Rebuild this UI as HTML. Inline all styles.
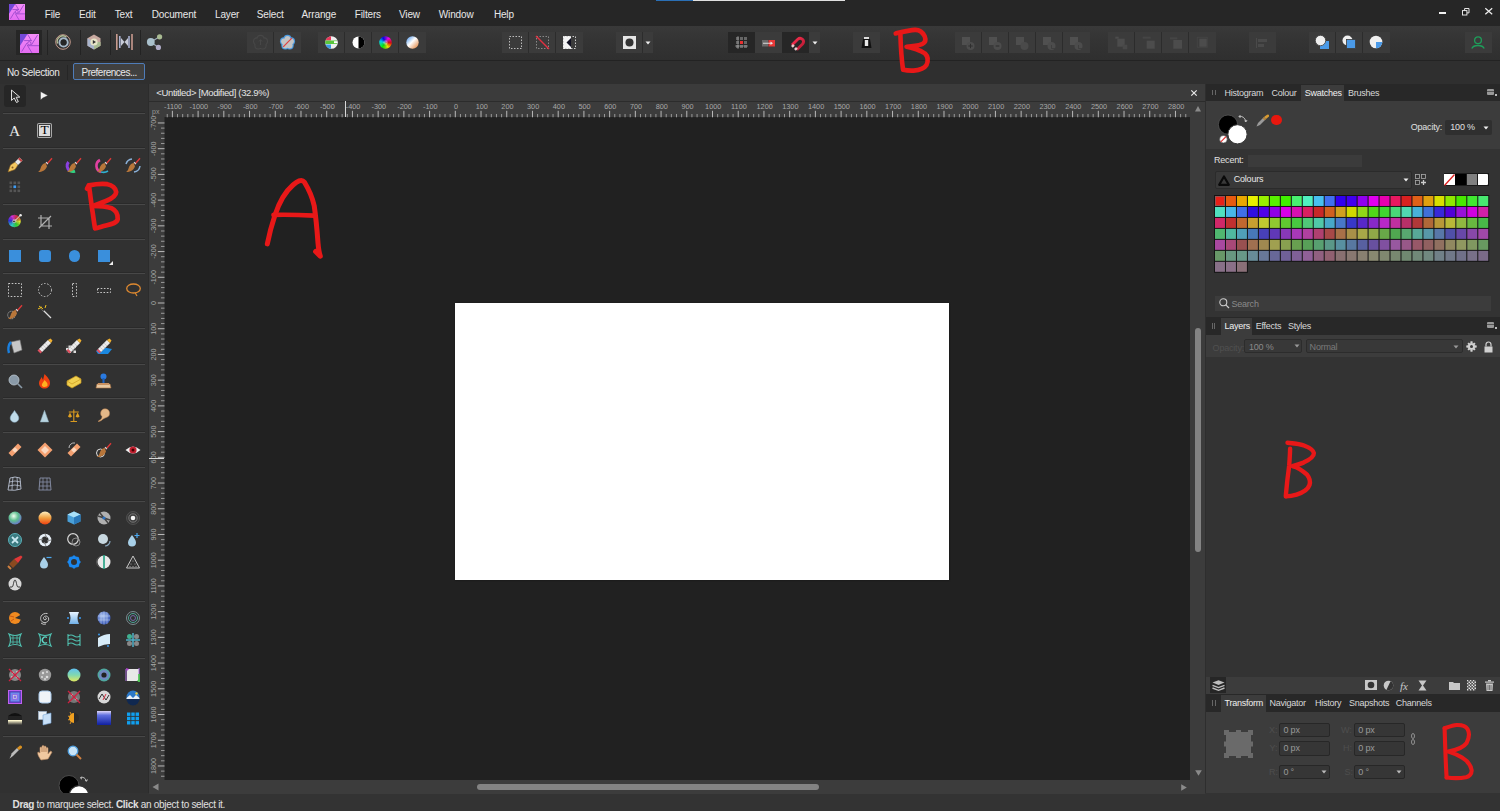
<!DOCTYPE html>
<html><head><meta charset="utf-8">
<style>
*{margin:0;padding:0;box-sizing:border-box}
html,body{width:1500px;height:811px;overflow:hidden;background:#2e2e2e;font-family:"Liberation Sans",sans-serif;color:#e6e6e6;font-size:10px}
.a{position:absolute}
.t{position:absolute;white-space:pre;line-height:10px;font-size:10px}
svg{position:absolute;overflow:visible}

</style></head><body>
<div class="a" style="left:0px;top:0px;width:1500px;height:26px;background:#262626;"></div>
<div class="a" style="left:0px;top:26px;width:1500px;height:34px;background:linear-gradient(#393939,#343434 40%,#2f2f2f);"></div>
<div class="a" style="left:0px;top:60px;width:1500px;height:1px;background:#232323;"></div>
<div class="a" style="left:0px;top:61px;width:1500px;height:23px;background:#2f2f2f;"></div>
<div class="a" style="left:0px;top:84px;width:148px;height:709px;background:#313131;"></div>
<div class="a" style="left:0px;top:793px;width:1500px;height:18px;background:#333333;"></div>
<div class="a" style="left:656px;top:0px;width:37px;height:1px;background:#2a6fb5;"></div>
<div class="a" style="left:693px;top:0px;width:152px;height:1px;background:#e0e0e0;"></div>
<svg style="left:9px;top:4px" width="16" height="16" viewBox="0 0 16 16"><defs><linearGradient id="lg0" x1="0" y1="0" x2="0" y2="1"><stop offset="0" stop-color="#f48ef8"/><stop offset="1" stop-color="#e46cf2"/></linearGradient></defs><g transform="scale(0.842)"><rect x="0" y="0" width="19" height="19" fill="url(#lg0)"/>
<path d="M0 0 H7.6 L0 11.7Z" fill="#7448d8"/>
<g stroke="#9a48cc" stroke-width="1" fill="none">
<path d="M4.1 6.6 H11.4 M7.6 0.3 L11.7 7.2 M17.6 1 L11.4 11 M8.3 11.7 H19 M7.2 11 L12 19 M1.7 17.6 L6.9 9"/><circle cx="9.3" cy="9.3" r="1.7"/></g></g></svg>
<div class="t" style="left:44.7px;top:9.73px;font-size:10px;line-height:10px;color:#e8e8e8;letter-spacing:-0.15px">File</div>
<div class="t" style="left:79px;top:9.73px;font-size:10px;line-height:10px;color:#e8e8e8;letter-spacing:-0.15px">Edit</div>
<div class="t" style="left:114.7px;top:9.73px;font-size:10px;line-height:10px;color:#e8e8e8;letter-spacing:-0.15px">Text</div>
<div class="t" style="left:151.8px;top:9.73px;font-size:10px;line-height:10px;color:#e8e8e8;letter-spacing:-0.15px">Document</div>
<div class="t" style="left:215px;top:9.73px;font-size:10px;line-height:10px;color:#e8e8e8;letter-spacing:-0.15px">Layer</div>
<div class="t" style="left:256.8px;top:9.73px;font-size:10px;line-height:10px;color:#e8e8e8;letter-spacing:-0.15px">Select</div>
<div class="t" style="left:301.6px;top:9.73px;font-size:10px;line-height:10px;color:#e8e8e8;letter-spacing:-0.15px">Arrange</div>
<div class="t" style="left:354.8px;top:9.73px;font-size:10px;line-height:10px;color:#e8e8e8;letter-spacing:-0.15px">Filters</div>
<div class="t" style="left:399px;top:9.73px;font-size:10px;line-height:10px;color:#e8e8e8;letter-spacing:-0.15px">View</div>
<div class="t" style="left:438.8px;top:9.73px;font-size:10px;line-height:10px;color:#e8e8e8;letter-spacing:-0.15px">Window</div>
<div class="t" style="left:493.9px;top:9.73px;font-size:10px;line-height:10px;color:#e8e8e8;letter-spacing:-0.15px">Help</div>
<div class="a" style="left:1439px;top:12.3px;width:7px;height:2.1px;background:#f0f0f0;"></div>
<svg style="left:1461.5px;top:8px" width="7.5" height="7.5" viewBox="0 0 7.5 7.5"><rect x="0.5" y="2.6" width="4.4" height="4.4" fill="#1a1a1a" stroke="#eee" stroke-width="0.95"/><path d="M2.6 2.6 V0.5 H7 V4.9 H4.9" fill="none" stroke="#eee" stroke-width="0.95"/></svg>
<svg style="left:1484.5px;top:8px" width="7.5" height="6.5" viewBox="0 0 7.5 6.5"><path d="M0.3 0.3 L7.2 6.2 M7.2 0.3 L0.3 6.2" stroke="#f0f0f0" stroke-width="1.2"/></svg>
<div class="a" style="left:16px;top:30px;width:26px;height:25px;background:#262626;"></div>
<svg style="left:19.5px;top:33.5px" width="19" height="19" viewBox="0 0 19 19"><defs><linearGradient id="lg1" x1="0" y1="0" x2="0" y2="1"><stop offset="0" stop-color="#f48ef8"/><stop offset="1" stop-color="#e46cf2"/></linearGradient></defs><rect x="0" y="0" width="19" height="19" fill="url(#lg1)"/>
<path d="M0 0 H7.6 L0 11.7Z" fill="#7448d8"/>
<g stroke="#9a48cc" stroke-width="0.9" fill="none">
<path d="M4.1 6.6 H11.4 M7.6 0.3 L11.7 7.2 M17.6 1 L11.4 11 M8.3 11.7 H19 M7.2 11 L12 19 M1.7 17.6 L6.9 9"/><circle cx="9.3" cy="9.3" r="1.7"/></g></svg>
<div class="a" style="left:46.5px;top:30px;width:1px;height:25px;background:#232323;"></div>
<div class="a" style="left:79.5px;top:30px;width:1px;height:25px;background:#232323;"></div>
<div class="a" style="left:109.5px;top:30px;width:1px;height:25px;background:#232323;"></div>
<div class="a" style="left:140px;top:30px;width:1px;height:25px;background:#232323;"></div>
<svg style="left:55px;top:34px" width="16" height="16" viewBox="0 0 16 16"><circle cx="8" cy="8" r="7.3" fill="none" stroke="#c49a8c" stroke-width="1"/><path d="M2.6 9.5 A5.6 5.6 0 0 1 11.5 3.3" fill="none" stroke="#b4c098" stroke-width="1.3"/><circle cx="8.6" cy="8.4" r="4.1" fill="none" stroke="#a6b8c8" stroke-width="2"/><circle cx="8.6" cy="8.4" r="2.9" fill="#262626"/></svg>
<svg style="left:86px;top:34px" width="16" height="16" viewBox="0 0 16 16"><path d="M8 0.5 L14.5 4.2 V11.8 L8 15.5 L1.5 11.8 V4.2 Z" fill="#c8a9a0"/><path d="M1.5 4.2 L8 8 V15.5 L1.5 11.8Z" fill="#a8b4cc"/><path d="M14.5 8 V11.8 L8 15.5 V8Z" fill="#a7bb92"/><circle cx="8" cy="8" r="3.6" fill="#e8e6c8"/><path d="M6.8 6 L10 8 L6.8 10Z" fill="#333"/></svg>
<svg style="left:116px;top:34px" width="17" height="16" viewBox="0 0 17 16"><rect x="0" y="0" width="1.6" height="16" fill="#c79a8e"/><rect x="15.2" y="0" width="1.6" height="16" fill="#c79a8e"/><rect x="3" y="2" width="1.6" height="12" fill="#a8b0d0"/><rect x="12.2" y="2" width="1.6" height="12" fill="#a8b0d0"/><path d="M5 4 L8.5 8 L12 4 V12 L8.5 8 L5 12Z" fill="#c8ccd8"/></svg>
<svg style="left:146px;top:34px" width="16" height="16" viewBox="0 0 16 16"><path d="M4.8 8 L13.6 2.8 M4.8 8 L12.4 13.4" stroke="#9aa8b8" stroke-width="1.2"/><circle cx="4.8" cy="8" r="3.9" fill="#a9c0cc"/><circle cx="13.6" cy="2.8" r="2.6" fill="#a9bb92"/><circle cx="12.4" cy="13.4" r="2.6" fill="#b0acc8"/></svg>
<div class="a" style="left:247px;top:32px;width:26px;height:21px;background:#3b3b3b;"></div>
<div class="a" style="left:273px;top:32px;width:1px;height:21px;background:#2c2c2c;"></div>
<div class="a" style="left:274px;top:32px;width:27px;height:21px;background:#3b3b3b;"></div>
<svg style="left:252.5px;top:35px" width="15" height="15" viewBox="0 0 15 15"><circle cx="7.5" cy="7.5" r="4.70" fill="#474747"/><circle cx="7.50" cy="3.80" r="4.00" fill="#474747"/><circle cx="11.02" cy="6.36" r="4.00" fill="#474747"/><circle cx="9.67" cy="10.49" r="4.00" fill="#474747"/><circle cx="5.33" cy="10.49" r="4.00" fill="#474747"/><circle cx="3.98" cy="6.36" r="4.00" fill="#474747"/><circle cx="7.5" cy="7.5" r="3.60" fill="#3b3b3b"/><circle cx="7.50" cy="3.80" r="2.90" fill="#3b3b3b"/><circle cx="11.02" cy="6.36" r="2.90" fill="#3b3b3b"/><circle cx="9.67" cy="10.49" r="2.90" fill="#3b3b3b"/><circle cx="5.33" cy="10.49" r="2.90" fill="#3b3b3b"/><circle cx="3.98" cy="6.36" r="2.90" fill="#3b3b3b"/><path d="M7.5 4.8 V10 M5.6 6.6 L7.5 4.8 L9.4 6.6" stroke="#474747" stroke-width="1" fill="none"/></svg>
<svg style="left:279.5px;top:35px" width="15" height="15" viewBox="0 0 15 15"><circle cx="7.5" cy="7.5" r="4.70" fill="#4a9ae0"/><circle cx="7.50" cy="3.80" r="4.00" fill="#4a9ae0"/><circle cx="11.02" cy="6.36" r="4.00" fill="#4a9ae0"/><circle cx="9.67" cy="10.49" r="4.00" fill="#4a9ae0"/><circle cx="5.33" cy="10.49" r="4.00" fill="#4a9ae0"/><circle cx="3.98" cy="6.36" r="4.00" fill="#4a9ae0"/><circle cx="7.5" cy="7.5" r="3.60" fill="#c4c4c4"/><circle cx="7.50" cy="3.80" r="2.90" fill="#c4c4c4"/><circle cx="11.02" cy="6.36" r="2.90" fill="#c4c4c4"/><circle cx="9.67" cy="10.49" r="2.90" fill="#c4c4c4"/><circle cx="5.33" cy="10.49" r="2.90" fill="#c4c4c4"/><circle cx="3.98" cy="6.36" r="2.90" fill="#c4c4c4"/><path d="M3.2 11.8 L11.8 3.2" stroke="#e04040" stroke-width="1.2"/></svg>
<div class="a" style="left:318px;top:32px;width:26px;height:21px;background:#3b3b3b;"></div>
<div class="a" style="left:344px;top:32px;width:1px;height:21px;background:#2c2c2c;"></div>
<div class="a" style="left:345px;top:32px;width:26px;height:21px;background:#3b3b3b;"></div>
<div class="a" style="left:371px;top:32px;width:1px;height:21px;background:#2c2c2c;"></div>
<div class="a" style="left:372px;top:32px;width:26px;height:21px;background:#3b3b3b;"></div>
<div class="a" style="left:398px;top:32px;width:1px;height:21px;background:#2c2c2c;"></div>
<div class="a" style="left:399px;top:32px;width:27px;height:21px;background:#3b3b3b;"></div>
<svg style="left:325px;top:36px" width="13" height="13" viewBox="0 0 13 13"><clipPath id="c3a"><circle cx="6.5" cy="6.5" r="6.3"/></clipPath><g clip-path="url(#c3a)"><rect x="0" y="0" width="13" height="13" fill="#eee"/><rect x="0" y="0" width="6" height="4.5" fill="#e8385a"/><rect x="0" y="4.5" width="12" height="3.5" fill="#59c63a"/><rect x="0" y="8.5" width="6" height="5" fill="#3a9ae0"/><rect x="9" y="5.2" width="3.5" height="2" fill="#fff"/></g></svg>
<svg style="left:352px;top:36px" width="13" height="13" viewBox="0 0 13 13"><circle cx="6.5" cy="6.5" r="6" fill="#fff"/><path d="M6.5 0.5 A6 6 0 0 1 6.5 12.5Z" fill="#000"/></svg>
<svg style="left:379px;top:36px" width="13" height="13" viewBox="0 0 13 13"><path d="M6.5 6.5 L12.70 6.50 A6.2 6.2 0 0 1 12.59 7.66Z" fill="#ff0000"/><path d="M6.5 6.5 L12.61 7.58 A6.2 6.2 0 0 1 12.30 8.70Z" fill="#ff2a00"/><path d="M6.5 6.5 L12.33 8.62 A6.2 6.2 0 0 1 11.83 9.67Z" fill="#ff5500"/><path d="M6.5 6.5 L11.87 9.60 A6.2 6.2 0 0 1 11.19 10.55Z" fill="#ff7f00"/><path d="M6.5 6.5 L11.25 10.49 A6.2 6.2 0 0 1 10.42 11.30Z" fill="#ffaa00"/><path d="M6.5 6.5 L10.49 11.25 A6.2 6.2 0 0 1 9.52 11.91Z" fill="#ffd400"/><path d="M6.5 6.5 L9.60 11.87 A6.2 6.2 0 0 1 8.54 12.36Z" fill="#feff00"/><path d="M6.5 6.5 L8.62 12.33 A6.2 6.2 0 0 1 7.49 12.62Z" fill="#d4ff00"/><path d="M6.5 6.5 L7.58 12.61 A6.2 6.2 0 0 1 6.41 12.70Z" fill="#a9ff00"/><path d="M6.5 6.5 L6.50 12.70 A6.2 6.2 0 0 1 5.34 12.59Z" fill="#7fff00"/><path d="M6.5 6.5 L5.42 12.61 A6.2 6.2 0 0 1 4.30 12.30Z" fill="#54ff00"/><path d="M6.5 6.5 L4.38 12.33 A6.2 6.2 0 0 1 3.33 11.83Z" fill="#2aff00"/><path d="M6.5 6.5 L3.40 11.87 A6.2 6.2 0 0 1 2.45 11.19Z" fill="#00ff00"/><path d="M6.5 6.5 L2.51 11.25 A6.2 6.2 0 0 1 1.70 10.42Z" fill="#00ff2a"/><path d="M6.5 6.5 L1.75 10.49 A6.2 6.2 0 0 1 1.09 9.52Z" fill="#00ff55"/><path d="M6.5 6.5 L1.13 9.60 A6.2 6.2 0 0 1 0.64 8.54Z" fill="#00ff7f"/><path d="M6.5 6.5 L0.67 8.62 A6.2 6.2 0 0 1 0.38 7.49Z" fill="#00ffaa"/><path d="M6.5 6.5 L0.39 7.58 A6.2 6.2 0 0 1 0.30 6.41Z" fill="#00ffd4"/><path d="M6.5 6.5 L0.30 6.50 A6.2 6.2 0 0 1 0.41 5.34Z" fill="#00feff"/><path d="M6.5 6.5 L0.39 5.42 A6.2 6.2 0 0 1 0.70 4.30Z" fill="#00d4ff"/><path d="M6.5 6.5 L0.67 4.38 A6.2 6.2 0 0 1 1.17 3.33Z" fill="#00a9ff"/><path d="M6.5 6.5 L1.13 3.40 A6.2 6.2 0 0 1 1.81 2.45Z" fill="#007fff"/><path d="M6.5 6.5 L1.75 2.51 A6.2 6.2 0 0 1 2.58 1.70Z" fill="#0054ff"/><path d="M6.5 6.5 L2.51 1.75 A6.2 6.2 0 0 1 3.48 1.09Z" fill="#002aff"/><path d="M6.5 6.5 L3.40 1.13 A6.2 6.2 0 0 1 4.46 0.64Z" fill="#0000ff"/><path d="M6.5 6.5 L4.38 0.67 A6.2 6.2 0 0 1 5.51 0.38Z" fill="#2a00ff"/><path d="M6.5 6.5 L5.42 0.39 A6.2 6.2 0 0 1 6.59 0.30Z" fill="#5500ff"/><path d="M6.5 6.5 L6.50 0.30 A6.2 6.2 0 0 1 7.66 0.41Z" fill="#7f00ff"/><path d="M6.5 6.5 L7.58 0.39 A6.2 6.2 0 0 1 8.70 0.70Z" fill="#aa00ff"/><path d="M6.5 6.5 L8.62 0.67 A6.2 6.2 0 0 1 9.67 1.17Z" fill="#d400ff"/><path d="M6.5 6.5 L9.60 1.13 A6.2 6.2 0 0 1 10.55 1.81Z" fill="#ff00fe"/><path d="M6.5 6.5 L10.49 1.75 A6.2 6.2 0 0 1 11.30 2.58Z" fill="#ff00d4"/><path d="M6.5 6.5 L11.25 2.51 A6.2 6.2 0 0 1 11.91 3.48Z" fill="#ff00a9"/><path d="M6.5 6.5 L11.87 3.40 A6.2 6.2 0 0 1 12.36 4.46Z" fill="#ff007f"/><path d="M6.5 6.5 L12.33 4.38 A6.2 6.2 0 0 1 12.62 5.51Z" fill="#ff0054"/><path d="M6.5 6.5 L12.61 5.42 A6.2 6.2 0 0 1 12.70 6.59Z" fill="#ff002a"/><circle cx="6.5" cy="6.5" r="2.2" fill="#fff" opacity="0.35"/></svg>
<svg style="left:406px;top:36px" width="13" height="13" viewBox="0 0 13 13"><defs><linearGradient id="gg" x1="0" y1="0" x2="1" y2="1"><stop offset="0" stop-color="#3a8ae8"/><stop offset="0.45" stop-color="#fff"/><stop offset="1" stop-color="#e0782a"/></linearGradient></defs><circle cx="6.5" cy="6.5" r="6.2" fill="url(#gg)"/></svg>
<div class="a" style="left:502px;top:32px;width:26px;height:21px;background:#3b3b3b;"></div>
<div class="a" style="left:528px;top:32px;width:1px;height:21px;background:#2c2c2c;"></div>
<div class="a" style="left:529px;top:32px;width:26px;height:21px;background:#3b3b3b;"></div>
<div class="a" style="left:555px;top:32px;width:1px;height:21px;background:#2c2c2c;"></div>
<div class="a" style="left:556px;top:32px;width:27px;height:21px;background:#3b3b3b;"></div>
<svg style="left:509px;top:36px" width="13" height="13" viewBox="0 0 13 13"><rect x="0.5" y="0.5" width="12" height="12" fill="none" stroke="#bbb" stroke-width="1" stroke-dasharray="1.5 1.5"/></svg>
<svg style="left:536px;top:36px" width="13" height="13" viewBox="0 0 13 13"><rect x="0.5" y="0.5" width="12" height="12" fill="none" stroke="#888" stroke-width="1" stroke-dasharray="1.5 1.5"/><path d="M0 0 L13 13" stroke="#e03040" stroke-width="1.4"/></svg>
<svg style="left:563px;top:36px" width="13" height="13" viewBox="0 0 13 13"><rect x="0" y="0" width="8" height="13" fill="#f4f4f4"/><path d="M8 2 L3.5 6.5 L8 11Z" fill="#112"/><rect x="0.5" y="0.5" width="12" height="12" fill="none" stroke="#ccc" stroke-width="1" stroke-dasharray="1.5 1.5"/></svg>
<div class="a" style="left:616px;top:32px;width:26px;height:21px;background:#3b3b3b;"></div>
<div class="a" style="left:642px;top:32px;width:1px;height:21px;background:#2c2c2c;"></div>
<div class="a" style="left:643px;top:32px;width:10px;height:21px;background:#3b3b3b;"></div>
<svg style="left:623px;top:36px" width="13" height="13" viewBox="0 0 13 13"><rect x="0" y="0" width="13" height="13" fill="#e6e6e6"/><circle cx="6.5" cy="6.5" r="4" fill="#333"/></svg>
<svg style="left:645px;top:41px" width="6" height="4" viewBox="0 0 6 4"><path d="M0.5 0.5 H5.5 L3 3.5Z" fill="#eee"/></svg>
<div class="a" style="left:728px;top:32px;width:27px;height:21px;background:#262626;"></div>
<div class="a" style="left:755px;top:32px;width:27px;height:21px;background:#3b3b3b;"></div>
<div class="a" style="left:782px;top:32px;width:27px;height:21px;background:#262626;"></div>
<div class="a" style="left:809px;top:32px;width:11px;height:21px;background:#3b3b3b;"></div>
<svg style="left:735px;top:36px" width="13" height="13" viewBox="0 0 13 13"><g fill="#666"><rect x="1" y="1" width="3" height="3"/><rect x="5" y="1" width="3" height="3"/><rect x="9" y="1" width="3" height="3"/><rect x="1" y="5" width="3" height="3"/><rect x="9" y="5" width="3" height="3"/><rect x="1" y="9" width="3" height="3"/><rect x="5" y="9" width="3" height="3"/><rect x="9" y="9" width="3" height="3"/></g><rect x="5" y="5" width="3" height="3" fill="#e83030"/><path d="M3 0 V13 M0 10 H13" stroke="#aaa" stroke-width="0.6"/></svg>
<svg style="left:762px;top:40px" width="13" height="6.5" viewBox="0 0 13 6.5"><rect x="0" y="0" width="6" height="6.5" fill="#6a6a6a"/><rect x="6.5" y="0" width="6.5" height="6.5" fill="#e83838"/><path d="M1 3.25 H10" stroke="#e8e8e8" stroke-width="0.9"/><path d="M8.5 1.6 L11 3.25 L8.5 4.9Z" fill="#e8e8e8"/></svg>
<svg style="left:788.5px;top:34.2px" width="16" height="15" viewBox="0 0 16 15"><defs><linearGradient id="mg" x1="0" y1="0" x2="1" y2="1"><stop offset="0" stop-color="#ff3050"/><stop offset="1" stop-color="#b01830"/></linearGradient></defs><path d="M3 11 L8.8 5.2 A3.4 3.4 0 0 1 13.6 10 L7.8 15.8" fill="none" stroke="url(#mg)" stroke-width="2.8"/><path d="M3 11 L4.8 12.8 M7.8 15.8 L6 14" stroke="#e8c8c8" stroke-width="2.8"/></svg>
<svg style="left:812px;top:41px" width="6" height="4" viewBox="0 0 6 4"><path d="M0.5 0.5 H5.5 L3 3.5Z" fill="#eee"/></svg>
<div class="a" style="left:853px;top:32px;width:27px;height:21px;background:#3b3b3b;"></div>
<svg style="left:861px;top:36px" width="11" height="13" viewBox="0 0 11 13"><path d="M2 3 H9 L10.5 12 H0.5Z" fill="#111"/><rect x="3" y="1" width="5" height="2" fill="#ddd"/><rect x="3.8" y="4" width="3.4" height="6" fill="#e8e8e8"/></svg>
<div class="a" style="left:955px;top:32px;width:26px;height:21px;background:#3b3b3b;"></div>
<div class="a" style="left:981px;top:32px;width:1px;height:21px;background:#2c2c2c;"></div>
<div class="a" style="left:982px;top:32px;width:26px;height:21px;background:#3b3b3b;"></div>
<div class="a" style="left:1008px;top:32px;width:1px;height:21px;background:#2c2c2c;"></div>
<div class="a" style="left:1009px;top:32px;width:26px;height:21px;background:#3b3b3b;"></div>
<div class="a" style="left:1035px;top:32px;width:1px;height:21px;background:#2c2c2c;"></div>
<div class="a" style="left:1036px;top:32px;width:26px;height:21px;background:#3b3b3b;"></div>
<div class="a" style="left:1062px;top:32px;width:1px;height:21px;background:#2c2c2c;"></div>
<div class="a" style="left:1063px;top:32px;width:27px;height:21px;background:#3b3b3b;"></div>
<svg style="left:962px;top:37px" width="16" height="16" viewBox="0 0 16 16"><rect x="0" y="0" width="8" height="8" fill="#505050"/><circle cx="8.5" cy="9" r="4" fill="#4c4c4c"/><path d="M8.5 6.8 V11.2 M6.3 9 H10.7" stroke="#2e2e2e" stroke-width="1"/></svg>
<svg style="left:989px;top:37px" width="16" height="16" viewBox="0 0 16 16"><rect x="0" y="0" width="8" height="8" fill="#505050"/><circle cx="8.5" cy="9" r="4" fill="#4c4c4c"/><path d="M6.7 9 H10.3" stroke="#2e2e2e" stroke-width="1.1"/></svg>
<svg style="left:1016px;top:37px" width="16" height="16" viewBox="0 0 16 16"><rect x="0" y="0" width="8" height="8" fill="#4e4e4e"/><circle cx="8.5" cy="9" r="4" fill="#4a4a4a"/></svg>
<svg style="left:1043px;top:37px" width="16" height="16" viewBox="0 0 16 16"><rect x="0" y="0" width="8" height="8" fill="#505050"/><circle cx="8.5" cy="9" r="4" fill="#4c4c4c"/><path d="M8.5 8 V11.5 H12" fill="none" stroke="#3b3b3b" stroke-width="0.8"/></svg>
<svg style="left:1070px;top:37px" width="16" height="16" viewBox="0 0 16 16"><rect x="0" y="0" width="8" height="8" fill="#505050"/><circle cx="8.5" cy="9" r="4" fill="#4c4c4c"/><path d="M8.5 8 V11.5 H12" fill="none" stroke="#3b3b3b" stroke-width="0.8"/></svg>
<div class="a" style="left:1108px;top:32px;width:26px;height:21px;background:#3b3b3b;"></div>
<div class="a" style="left:1134px;top:32px;width:1px;height:21px;background:#2c2c2c;"></div>
<div class="a" style="left:1135px;top:32px;width:26px;height:21px;background:#3b3b3b;"></div>
<div class="a" style="left:1161px;top:32px;width:1px;height:21px;background:#2c2c2c;"></div>
<div class="a" style="left:1162px;top:32px;width:26px;height:21px;background:#3b3b3b;"></div>
<div class="a" style="left:1188px;top:32px;width:1px;height:21px;background:#2c2c2c;"></div>
<div class="a" style="left:1189px;top:32px;width:27px;height:21px;background:#3b3b3b;"></div>
<svg style="left:1108px;top:26px" width="108" height="34" viewBox="0 0 108 34"><g fill="#4c4c4c"><rect x="7.3" y="10.7" width="3.4" height="2"/><rect x="9.3" y="12.7" width="7.4" height="8"/><rect x="14.7" y="18.7" width="4.6" height="4.6" fill="#484848"/><rect x="34.7" y="10.7" width="8" height="2" fill="#454545"/><rect x="38.7" y="14.7" width="8" height="8"/><rect x="62" y="11.3" width="7.3" height="2" fill="#454545"/><rect x="65.3" y="14" width="8.7" height="8.7"/><rect x="89.3" y="11.3" width="10" height="10" fill="none" stroke="#454545" stroke-width="0.8"/><rect x="91.3" y="12.7" width="7.4" height="8"/></g></svg>
<div class="a" style="left:1249px;top:32px;width:27px;height:21px;background:#3b3b3b;"></div>
<svg style="left:1256px;top:38px" width="12" height="10" viewBox="0 0 12 10"><rect x="0" y="0" width="1" height="10" fill="#4a4a4a"/><rect x="2" y="1" width="9" height="3" fill="#4a4a4a"/><rect x="2" y="6" width="6" height="3" fill="#4a4a4a"/></svg>
<div class="a" style="left:1309px;top:32px;width:26px;height:21px;background:#3b3b3b;"></div>
<div class="a" style="left:1335px;top:32px;width:1px;height:21px;background:#2c2c2c;"></div>
<div class="a" style="left:1336px;top:32px;width:26px;height:21px;background:#3b3b3b;"></div>
<div class="a" style="left:1362px;top:32px;width:1px;height:21px;background:#2c2c2c;"></div>
<div class="a" style="left:1363px;top:32px;width:27px;height:21px;background:#3b3b3b;"></div>
<svg style="left:1315px;top:35px" width="15" height="15" viewBox="0 0 15 15"><rect x="5" y="6" width="9" height="8" fill="#4a9ae8"/><circle cx="5.5" cy="5.5" r="5.2" fill="#efefef" stroke="#3b3b3b" stroke-width="0.8"/></svg>
<svg style="left:1342px;top:35px" width="15" height="15" viewBox="0 0 15 15"><circle cx="5.5" cy="5.5" r="5" fill="#efefef"/><rect x="4.5" y="4.5" width="9" height="9" fill="#4a9ae8" stroke="#3b3b3b" stroke-width="0.8"/></svg>
<svg style="left:1369px;top:35px" width="15" height="15" viewBox="0 0 15 15"><circle cx="7" cy="7" r="6.3" fill="#efefef"/><path d="M7 7 H13.3 A6.3 6.3 0 0 1 7 13.3Z" fill="#4a9ae8"/></svg>
<div class="a" style="left:1465px;top:32px;width:27px;height:21px;background:#3b3b3b;"></div>
<svg style="left:1471px;top:36px" width="14" height="13" viewBox="0 0 14 13"><circle cx="7" cy="4.2" r="3.4" fill="none" stroke="#1e9e5a" stroke-width="1.3"/><path d="M0.8 12.5 C2.5 8.5 11.5 8.5 13.2 12.5" fill="none" stroke="#1e9e5a" stroke-width="1.3"/></svg>
<div class="t" style="left:7px;top:67.53px;font-size:10px;line-height:10px;color:#e8e8e8;letter-spacing:-0.35px">No Selection</div>
<div class="a" style="left:67px;top:65px;width:1px;height:15px;background:#262626;"></div>
<div class="a" style="left:72.5px;top:63.3px;width:72.5px;height:16.4px;background:#404040;border:1px solid #4f7cb8;border-radius:2px"></div>
<div class="t" style="left:81.5px;top:67.53px;font-size:10px;line-height:10px;color:#e8e8e8;letter-spacing:-0.5px">Preferences...</div>
<div class="a" style="left:149px;top:84px;width:1056px;height:17px;background:#3b3b3b;"></div>
<div class="t" style="left:156.3px;top:88.46px;font-size:9.5px;line-height:9.5px;color:#e4e4e4;letter-spacing:-0.35px">&lt;Untitled&gt; [Modified] (32.9%)</div>
<svg style="left:1191.3px;top:89.5px" width="6" height="6" viewBox="0 0 6 6"><path d="M0.3 0.3 L5.7 5.7 M5.7 0.3 L0.3 5.7" stroke="#e8e8e8" stroke-width="1.2"/></svg>
<div class="a" style="left:1205px;top:84px;width:1.5px;height:709px;background:#2e2e2e;"></div>
<div class="a" style="left:149px;top:101px;width:1056px;height:16px;background:#3c3c3c;"></div>
<div class="a" style="left:149px;top:101px;width:1056px;height:1px;background:#2c2c2c;"></div>
<div class="a" style="left:149px;top:117px;width:15px;height:663px;background:#3c3c3c;"></div>
<div class="a" style="left:164.5px;top:117.3px;width:1026px;height:662.5px;background:#212121;"></div>
<div class="a" style="left:1190px;top:117px;width:15px;height:663px;background:#3c3c3c;"></div>
<div class="a" style="left:149px;top:780px;width:1056px;height:13.8px;background:#3c3c3c;"></div>
<div class="a" style="left:455.3px;top:302.6px;width:493.5px;height:277.5px;background:#ffffff;box-shadow:0 0 1.5px 0.5px #151515"></div>
<svg style="left:0;top:0" width="1500" height="811"><rect x="166.74" y="114" width="1" height="3.3" fill="#9a9a9a"/><rect x="171.88" y="110.8" width="1" height="6.5" fill="#b8b8b8"/><text x="173.08" y="109.3" font-size="7.3" fill="#a8a8a8" text-anchor="middle" font-family="Liberation Sans">-1100</text><rect x="177.02" y="114" width="1" height="3.3" fill="#9a9a9a"/><rect x="182.17" y="114" width="1" height="3.3" fill="#9a9a9a"/><rect x="187.31" y="114" width="1" height="3.3" fill="#9a9a9a"/><rect x="192.46" y="114" width="1" height="3.3" fill="#9a9a9a"/><rect x="197.60" y="110.8" width="1" height="6.5" fill="#b8b8b8"/><text x="198.80" y="109.3" font-size="7.3" fill="#a8a8a8" text-anchor="middle" font-family="Liberation Sans">-1000</text><rect x="202.74" y="114" width="1" height="3.3" fill="#9a9a9a"/><rect x="207.89" y="114" width="1" height="3.3" fill="#9a9a9a"/><rect x="213.03" y="114" width="1" height="3.3" fill="#9a9a9a"/><rect x="218.18" y="114" width="1" height="3.3" fill="#9a9a9a"/><rect x="223.32" y="110.8" width="1" height="6.5" fill="#b8b8b8"/><text x="224.52" y="109.3" font-size="7.3" fill="#a8a8a8" text-anchor="middle" font-family="Liberation Sans">-900</text><rect x="228.46" y="114" width="1" height="3.3" fill="#9a9a9a"/><rect x="233.61" y="114" width="1" height="3.3" fill="#9a9a9a"/><rect x="238.75" y="114" width="1" height="3.3" fill="#9a9a9a"/><rect x="243.90" y="114" width="1" height="3.3" fill="#9a9a9a"/><rect x="249.04" y="110.8" width="1" height="6.5" fill="#b8b8b8"/><text x="250.24" y="109.3" font-size="7.3" fill="#a8a8a8" text-anchor="middle" font-family="Liberation Sans">-800</text><rect x="254.18" y="114" width="1" height="3.3" fill="#9a9a9a"/><rect x="259.33" y="114" width="1" height="3.3" fill="#9a9a9a"/><rect x="264.47" y="114" width="1" height="3.3" fill="#9a9a9a"/><rect x="269.62" y="114" width="1" height="3.3" fill="#9a9a9a"/><rect x="274.76" y="110.8" width="1" height="6.5" fill="#b8b8b8"/><text x="275.96" y="109.3" font-size="7.3" fill="#a8a8a8" text-anchor="middle" font-family="Liberation Sans">-700</text><rect x="279.90" y="114" width="1" height="3.3" fill="#9a9a9a"/><rect x="285.05" y="114" width="1" height="3.3" fill="#9a9a9a"/><rect x="290.19" y="114" width="1" height="3.3" fill="#9a9a9a"/><rect x="295.34" y="114" width="1" height="3.3" fill="#9a9a9a"/><rect x="300.48" y="110.8" width="1" height="6.5" fill="#b8b8b8"/><text x="301.68" y="109.3" font-size="7.3" fill="#a8a8a8" text-anchor="middle" font-family="Liberation Sans">-600</text><rect x="305.62" y="114" width="1" height="3.3" fill="#9a9a9a"/><rect x="310.77" y="114" width="1" height="3.3" fill="#9a9a9a"/><rect x="315.91" y="114" width="1" height="3.3" fill="#9a9a9a"/><rect x="321.06" y="114" width="1" height="3.3" fill="#9a9a9a"/><rect x="326.20" y="110.8" width="1" height="6.5" fill="#b8b8b8"/><text x="327.40" y="109.3" font-size="7.3" fill="#a8a8a8" text-anchor="middle" font-family="Liberation Sans">-500</text><rect x="331.34" y="114" width="1" height="3.3" fill="#9a9a9a"/><rect x="336.49" y="114" width="1" height="3.3" fill="#9a9a9a"/><rect x="341.63" y="114" width="1" height="3.3" fill="#9a9a9a"/><rect x="346.78" y="114" width="1" height="3.3" fill="#9a9a9a"/><rect x="351.92" y="110.8" width="1" height="6.5" fill="#b8b8b8"/><text x="353.12" y="109.3" font-size="7.3" fill="#a8a8a8" text-anchor="middle" font-family="Liberation Sans">-400</text><rect x="357.06" y="114" width="1" height="3.3" fill="#9a9a9a"/><rect x="362.21" y="114" width="1" height="3.3" fill="#9a9a9a"/><rect x="367.35" y="114" width="1" height="3.3" fill="#9a9a9a"/><rect x="372.50" y="114" width="1" height="3.3" fill="#9a9a9a"/><rect x="377.64" y="110.8" width="1" height="6.5" fill="#b8b8b8"/><text x="378.84" y="109.3" font-size="7.3" fill="#a8a8a8" text-anchor="middle" font-family="Liberation Sans">-300</text><rect x="382.78" y="114" width="1" height="3.3" fill="#9a9a9a"/><rect x="387.93" y="114" width="1" height="3.3" fill="#9a9a9a"/><rect x="393.07" y="114" width="1" height="3.3" fill="#9a9a9a"/><rect x="398.22" y="114" width="1" height="3.3" fill="#9a9a9a"/><rect x="403.36" y="110.8" width="1" height="6.5" fill="#b8b8b8"/><text x="404.56" y="109.3" font-size="7.3" fill="#a8a8a8" text-anchor="middle" font-family="Liberation Sans">-200</text><rect x="408.50" y="114" width="1" height="3.3" fill="#9a9a9a"/><rect x="413.65" y="114" width="1" height="3.3" fill="#9a9a9a"/><rect x="418.79" y="114" width="1" height="3.3" fill="#9a9a9a"/><rect x="423.94" y="114" width="1" height="3.3" fill="#9a9a9a"/><rect x="429.08" y="110.8" width="1" height="6.5" fill="#b8b8b8"/><text x="430.28" y="109.3" font-size="7.3" fill="#a8a8a8" text-anchor="middle" font-family="Liberation Sans">-100</text><rect x="434.22" y="114" width="1" height="3.3" fill="#9a9a9a"/><rect x="439.37" y="114" width="1" height="3.3" fill="#9a9a9a"/><rect x="444.51" y="114" width="1" height="3.3" fill="#9a9a9a"/><rect x="449.66" y="114" width="1" height="3.3" fill="#9a9a9a"/><rect x="454.80" y="110.8" width="1" height="6.5" fill="#b8b8b8"/><text x="456.00" y="109.3" font-size="7.3" fill="#a8a8a8" text-anchor="middle" font-family="Liberation Sans">0</text><rect x="459.94" y="114" width="1" height="3.3" fill="#9a9a9a"/><rect x="465.09" y="114" width="1" height="3.3" fill="#9a9a9a"/><rect x="470.23" y="114" width="1" height="3.3" fill="#9a9a9a"/><rect x="475.38" y="114" width="1" height="3.3" fill="#9a9a9a"/><rect x="480.52" y="110.8" width="1" height="6.5" fill="#b8b8b8"/><text x="481.72" y="109.3" font-size="7.3" fill="#a8a8a8" text-anchor="middle" font-family="Liberation Sans">100</text><rect x="485.66" y="114" width="1" height="3.3" fill="#9a9a9a"/><rect x="490.81" y="114" width="1" height="3.3" fill="#9a9a9a"/><rect x="495.95" y="114" width="1" height="3.3" fill="#9a9a9a"/><rect x="501.10" y="114" width="1" height="3.3" fill="#9a9a9a"/><rect x="506.24" y="110.8" width="1" height="6.5" fill="#b8b8b8"/><text x="507.44" y="109.3" font-size="7.3" fill="#a8a8a8" text-anchor="middle" font-family="Liberation Sans">200</text><rect x="511.38" y="114" width="1" height="3.3" fill="#9a9a9a"/><rect x="516.53" y="114" width="1" height="3.3" fill="#9a9a9a"/><rect x="521.67" y="114" width="1" height="3.3" fill="#9a9a9a"/><rect x="526.82" y="114" width="1" height="3.3" fill="#9a9a9a"/><rect x="531.96" y="110.8" width="1" height="6.5" fill="#b8b8b8"/><text x="533.16" y="109.3" font-size="7.3" fill="#a8a8a8" text-anchor="middle" font-family="Liberation Sans">300</text><rect x="537.10" y="114" width="1" height="3.3" fill="#9a9a9a"/><rect x="542.25" y="114" width="1" height="3.3" fill="#9a9a9a"/><rect x="547.39" y="114" width="1" height="3.3" fill="#9a9a9a"/><rect x="552.54" y="114" width="1" height="3.3" fill="#9a9a9a"/><rect x="557.68" y="110.8" width="1" height="6.5" fill="#b8b8b8"/><text x="558.88" y="109.3" font-size="7.3" fill="#a8a8a8" text-anchor="middle" font-family="Liberation Sans">400</text><rect x="562.82" y="114" width="1" height="3.3" fill="#9a9a9a"/><rect x="567.97" y="114" width="1" height="3.3" fill="#9a9a9a"/><rect x="573.11" y="114" width="1" height="3.3" fill="#9a9a9a"/><rect x="578.26" y="114" width="1" height="3.3" fill="#9a9a9a"/><rect x="583.40" y="110.8" width="1" height="6.5" fill="#b8b8b8"/><text x="584.60" y="109.3" font-size="7.3" fill="#a8a8a8" text-anchor="middle" font-family="Liberation Sans">500</text><rect x="588.54" y="114" width="1" height="3.3" fill="#9a9a9a"/><rect x="593.69" y="114" width="1" height="3.3" fill="#9a9a9a"/><rect x="598.83" y="114" width="1" height="3.3" fill="#9a9a9a"/><rect x="603.98" y="114" width="1" height="3.3" fill="#9a9a9a"/><rect x="609.12" y="110.8" width="1" height="6.5" fill="#b8b8b8"/><text x="610.32" y="109.3" font-size="7.3" fill="#a8a8a8" text-anchor="middle" font-family="Liberation Sans">600</text><rect x="614.26" y="114" width="1" height="3.3" fill="#9a9a9a"/><rect x="619.41" y="114" width="1" height="3.3" fill="#9a9a9a"/><rect x="624.55" y="114" width="1" height="3.3" fill="#9a9a9a"/><rect x="629.70" y="114" width="1" height="3.3" fill="#9a9a9a"/><rect x="634.84" y="110.8" width="1" height="6.5" fill="#b8b8b8"/><text x="636.04" y="109.3" font-size="7.3" fill="#a8a8a8" text-anchor="middle" font-family="Liberation Sans">700</text><rect x="639.98" y="114" width="1" height="3.3" fill="#9a9a9a"/><rect x="645.13" y="114" width="1" height="3.3" fill="#9a9a9a"/><rect x="650.27" y="114" width="1" height="3.3" fill="#9a9a9a"/><rect x="655.42" y="114" width="1" height="3.3" fill="#9a9a9a"/><rect x="660.56" y="110.8" width="1" height="6.5" fill="#b8b8b8"/><text x="661.76" y="109.3" font-size="7.3" fill="#a8a8a8" text-anchor="middle" font-family="Liberation Sans">800</text><rect x="665.70" y="114" width="1" height="3.3" fill="#9a9a9a"/><rect x="670.85" y="114" width="1" height="3.3" fill="#9a9a9a"/><rect x="675.99" y="114" width="1" height="3.3" fill="#9a9a9a"/><rect x="681.14" y="114" width="1" height="3.3" fill="#9a9a9a"/><rect x="686.28" y="110.8" width="1" height="6.5" fill="#b8b8b8"/><text x="687.48" y="109.3" font-size="7.3" fill="#a8a8a8" text-anchor="middle" font-family="Liberation Sans">900</text><rect x="691.42" y="114" width="1" height="3.3" fill="#9a9a9a"/><rect x="696.57" y="114" width="1" height="3.3" fill="#9a9a9a"/><rect x="701.71" y="114" width="1" height="3.3" fill="#9a9a9a"/><rect x="706.86" y="114" width="1" height="3.3" fill="#9a9a9a"/><rect x="712.00" y="110.8" width="1" height="6.5" fill="#b8b8b8"/><text x="713.20" y="109.3" font-size="7.3" fill="#a8a8a8" text-anchor="middle" font-family="Liberation Sans">1000</text><rect x="717.14" y="114" width="1" height="3.3" fill="#9a9a9a"/><rect x="722.29" y="114" width="1" height="3.3" fill="#9a9a9a"/><rect x="727.43" y="114" width="1" height="3.3" fill="#9a9a9a"/><rect x="732.58" y="114" width="1" height="3.3" fill="#9a9a9a"/><rect x="737.72" y="110.8" width="1" height="6.5" fill="#b8b8b8"/><text x="738.92" y="109.3" font-size="7.3" fill="#a8a8a8" text-anchor="middle" font-family="Liberation Sans">1100</text><rect x="742.86" y="114" width="1" height="3.3" fill="#9a9a9a"/><rect x="748.01" y="114" width="1" height="3.3" fill="#9a9a9a"/><rect x="753.15" y="114" width="1" height="3.3" fill="#9a9a9a"/><rect x="758.30" y="114" width="1" height="3.3" fill="#9a9a9a"/><rect x="763.44" y="110.8" width="1" height="6.5" fill="#b8b8b8"/><text x="764.64" y="109.3" font-size="7.3" fill="#a8a8a8" text-anchor="middle" font-family="Liberation Sans">1200</text><rect x="768.58" y="114" width="1" height="3.3" fill="#9a9a9a"/><rect x="773.73" y="114" width="1" height="3.3" fill="#9a9a9a"/><rect x="778.87" y="114" width="1" height="3.3" fill="#9a9a9a"/><rect x="784.02" y="114" width="1" height="3.3" fill="#9a9a9a"/><rect x="789.16" y="110.8" width="1" height="6.5" fill="#b8b8b8"/><text x="790.36" y="109.3" font-size="7.3" fill="#a8a8a8" text-anchor="middle" font-family="Liberation Sans">1300</text><rect x="794.30" y="114" width="1" height="3.3" fill="#9a9a9a"/><rect x="799.45" y="114" width="1" height="3.3" fill="#9a9a9a"/><rect x="804.59" y="114" width="1" height="3.3" fill="#9a9a9a"/><rect x="809.74" y="114" width="1" height="3.3" fill="#9a9a9a"/><rect x="814.88" y="110.8" width="1" height="6.5" fill="#b8b8b8"/><text x="816.08" y="109.3" font-size="7.3" fill="#a8a8a8" text-anchor="middle" font-family="Liberation Sans">1400</text><rect x="820.02" y="114" width="1" height="3.3" fill="#9a9a9a"/><rect x="825.17" y="114" width="1" height="3.3" fill="#9a9a9a"/><rect x="830.31" y="114" width="1" height="3.3" fill="#9a9a9a"/><rect x="835.46" y="114" width="1" height="3.3" fill="#9a9a9a"/><rect x="840.60" y="110.8" width="1" height="6.5" fill="#b8b8b8"/><text x="841.80" y="109.3" font-size="7.3" fill="#a8a8a8" text-anchor="middle" font-family="Liberation Sans">1500</text><rect x="845.74" y="114" width="1" height="3.3" fill="#9a9a9a"/><rect x="850.89" y="114" width="1" height="3.3" fill="#9a9a9a"/><rect x="856.03" y="114" width="1" height="3.3" fill="#9a9a9a"/><rect x="861.18" y="114" width="1" height="3.3" fill="#9a9a9a"/><rect x="866.32" y="110.8" width="1" height="6.5" fill="#b8b8b8"/><text x="867.52" y="109.3" font-size="7.3" fill="#a8a8a8" text-anchor="middle" font-family="Liberation Sans">1600</text><rect x="871.46" y="114" width="1" height="3.3" fill="#9a9a9a"/><rect x="876.61" y="114" width="1" height="3.3" fill="#9a9a9a"/><rect x="881.75" y="114" width="1" height="3.3" fill="#9a9a9a"/><rect x="886.90" y="114" width="1" height="3.3" fill="#9a9a9a"/><rect x="892.04" y="110.8" width="1" height="6.5" fill="#b8b8b8"/><text x="893.24" y="109.3" font-size="7.3" fill="#a8a8a8" text-anchor="middle" font-family="Liberation Sans">1700</text><rect x="897.18" y="114" width="1" height="3.3" fill="#9a9a9a"/><rect x="902.33" y="114" width="1" height="3.3" fill="#9a9a9a"/><rect x="907.47" y="114" width="1" height="3.3" fill="#9a9a9a"/><rect x="912.62" y="114" width="1" height="3.3" fill="#9a9a9a"/><rect x="917.76" y="110.8" width="1" height="6.5" fill="#b8b8b8"/><text x="918.96" y="109.3" font-size="7.3" fill="#a8a8a8" text-anchor="middle" font-family="Liberation Sans">1800</text><rect x="922.90" y="114" width="1" height="3.3" fill="#9a9a9a"/><rect x="928.05" y="114" width="1" height="3.3" fill="#9a9a9a"/><rect x="933.19" y="114" width="1" height="3.3" fill="#9a9a9a"/><rect x="938.34" y="114" width="1" height="3.3" fill="#9a9a9a"/><rect x="943.48" y="110.8" width="1" height="6.5" fill="#b8b8b8"/><text x="944.68" y="109.3" font-size="7.3" fill="#a8a8a8" text-anchor="middle" font-family="Liberation Sans">1900</text><rect x="948.62" y="114" width="1" height="3.3" fill="#9a9a9a"/><rect x="953.77" y="114" width="1" height="3.3" fill="#9a9a9a"/><rect x="958.91" y="114" width="1" height="3.3" fill="#9a9a9a"/><rect x="964.06" y="114" width="1" height="3.3" fill="#9a9a9a"/><rect x="969.20" y="110.8" width="1" height="6.5" fill="#b8b8b8"/><text x="970.40" y="109.3" font-size="7.3" fill="#a8a8a8" text-anchor="middle" font-family="Liberation Sans">2000</text><rect x="974.34" y="114" width="1" height="3.3" fill="#9a9a9a"/><rect x="979.49" y="114" width="1" height="3.3" fill="#9a9a9a"/><rect x="984.63" y="114" width="1" height="3.3" fill="#9a9a9a"/><rect x="989.78" y="114" width="1" height="3.3" fill="#9a9a9a"/><rect x="994.92" y="110.8" width="1" height="6.5" fill="#b8b8b8"/><text x="996.12" y="109.3" font-size="7.3" fill="#a8a8a8" text-anchor="middle" font-family="Liberation Sans">2100</text><rect x="1000.06" y="114" width="1" height="3.3" fill="#9a9a9a"/><rect x="1005.21" y="114" width="1" height="3.3" fill="#9a9a9a"/><rect x="1010.35" y="114" width="1" height="3.3" fill="#9a9a9a"/><rect x="1015.50" y="114" width="1" height="3.3" fill="#9a9a9a"/><rect x="1020.64" y="110.8" width="1" height="6.5" fill="#b8b8b8"/><text x="1021.84" y="109.3" font-size="7.3" fill="#a8a8a8" text-anchor="middle" font-family="Liberation Sans">2200</text><rect x="1025.78" y="114" width="1" height="3.3" fill="#9a9a9a"/><rect x="1030.93" y="114" width="1" height="3.3" fill="#9a9a9a"/><rect x="1036.07" y="114" width="1" height="3.3" fill="#9a9a9a"/><rect x="1041.22" y="114" width="1" height="3.3" fill="#9a9a9a"/><rect x="1046.36" y="110.8" width="1" height="6.5" fill="#b8b8b8"/><text x="1047.56" y="109.3" font-size="7.3" fill="#a8a8a8" text-anchor="middle" font-family="Liberation Sans">2300</text><rect x="1051.50" y="114" width="1" height="3.3" fill="#9a9a9a"/><rect x="1056.65" y="114" width="1" height="3.3" fill="#9a9a9a"/><rect x="1061.79" y="114" width="1" height="3.3" fill="#9a9a9a"/><rect x="1066.94" y="114" width="1" height="3.3" fill="#9a9a9a"/><rect x="1072.08" y="110.8" width="1" height="6.5" fill="#b8b8b8"/><text x="1073.28" y="109.3" font-size="7.3" fill="#a8a8a8" text-anchor="middle" font-family="Liberation Sans">2400</text><rect x="1077.22" y="114" width="1" height="3.3" fill="#9a9a9a"/><rect x="1082.37" y="114" width="1" height="3.3" fill="#9a9a9a"/><rect x="1087.51" y="114" width="1" height="3.3" fill="#9a9a9a"/><rect x="1092.66" y="114" width="1" height="3.3" fill="#9a9a9a"/><rect x="1097.80" y="110.8" width="1" height="6.5" fill="#b8b8b8"/><text x="1099.00" y="109.3" font-size="7.3" fill="#a8a8a8" text-anchor="middle" font-family="Liberation Sans">2500</text><rect x="1102.94" y="114" width="1" height="3.3" fill="#9a9a9a"/><rect x="1108.09" y="114" width="1" height="3.3" fill="#9a9a9a"/><rect x="1113.23" y="114" width="1" height="3.3" fill="#9a9a9a"/><rect x="1118.38" y="114" width="1" height="3.3" fill="#9a9a9a"/><rect x="1123.52" y="110.8" width="1" height="6.5" fill="#b8b8b8"/><text x="1124.72" y="109.3" font-size="7.3" fill="#a8a8a8" text-anchor="middle" font-family="Liberation Sans">2600</text><rect x="1128.66" y="114" width="1" height="3.3" fill="#9a9a9a"/><rect x="1133.81" y="114" width="1" height="3.3" fill="#9a9a9a"/><rect x="1138.95" y="114" width="1" height="3.3" fill="#9a9a9a"/><rect x="1144.10" y="114" width="1" height="3.3" fill="#9a9a9a"/><rect x="1149.24" y="110.8" width="1" height="6.5" fill="#b8b8b8"/><text x="1150.44" y="109.3" font-size="7.3" fill="#a8a8a8" text-anchor="middle" font-family="Liberation Sans">2700</text><rect x="1154.38" y="114" width="1" height="3.3" fill="#9a9a9a"/><rect x="1159.53" y="114" width="1" height="3.3" fill="#9a9a9a"/><rect x="1164.67" y="114" width="1" height="3.3" fill="#9a9a9a"/><rect x="1169.82" y="114" width="1" height="3.3" fill="#9a9a9a"/><rect x="1174.96" y="110.8" width="1" height="6.5" fill="#b8b8b8"/><text x="1176.16" y="109.3" font-size="7.3" fill="#a8a8a8" text-anchor="middle" font-family="Liberation Sans">2800</text><rect x="1180.10" y="114" width="1" height="3.3" fill="#9a9a9a"/><rect x="1185.25" y="114" width="1" height="3.3" fill="#9a9a9a"/></svg>
<svg style="left:0;top:0" width="1500" height="811"><rect x="157.8" y="122.46" width="6.7" height="1" fill="#b8b8b8"/><text transform="translate(155.6 122.96) rotate(-90)" x="0" y="0" font-size="7.3" fill="#a8a8a8" text-anchor="middle" font-family="Liberation Sans">-700</text><rect x="161" y="127.60" width="3.5" height="1" fill="#9a9a9a"/><rect x="161" y="132.75" width="3.5" height="1" fill="#9a9a9a"/><rect x="161" y="137.89" width="3.5" height="1" fill="#9a9a9a"/><rect x="161" y="143.04" width="3.5" height="1" fill="#9a9a9a"/><rect x="157.8" y="148.18" width="6.7" height="1" fill="#b8b8b8"/><text transform="translate(155.6 148.68) rotate(-90)" x="0" y="0" font-size="7.3" fill="#a8a8a8" text-anchor="middle" font-family="Liberation Sans">-600</text><rect x="161" y="153.32" width="3.5" height="1" fill="#9a9a9a"/><rect x="161" y="158.47" width="3.5" height="1" fill="#9a9a9a"/><rect x="161" y="163.61" width="3.5" height="1" fill="#9a9a9a"/><rect x="161" y="168.76" width="3.5" height="1" fill="#9a9a9a"/><rect x="157.8" y="173.90" width="6.7" height="1" fill="#b8b8b8"/><text transform="translate(155.6 174.40) rotate(-90)" x="0" y="0" font-size="7.3" fill="#a8a8a8" text-anchor="middle" font-family="Liberation Sans">-500</text><rect x="161" y="179.04" width="3.5" height="1" fill="#9a9a9a"/><rect x="161" y="184.19" width="3.5" height="1" fill="#9a9a9a"/><rect x="161" y="189.33" width="3.5" height="1" fill="#9a9a9a"/><rect x="161" y="194.48" width="3.5" height="1" fill="#9a9a9a"/><rect x="157.8" y="199.62" width="6.7" height="1" fill="#b8b8b8"/><text transform="translate(155.6 200.12) rotate(-90)" x="0" y="0" font-size="7.3" fill="#a8a8a8" text-anchor="middle" font-family="Liberation Sans">-400</text><rect x="161" y="204.76" width="3.5" height="1" fill="#9a9a9a"/><rect x="161" y="209.91" width="3.5" height="1" fill="#9a9a9a"/><rect x="161" y="215.05" width="3.5" height="1" fill="#9a9a9a"/><rect x="161" y="220.20" width="3.5" height="1" fill="#9a9a9a"/><rect x="157.8" y="225.34" width="6.7" height="1" fill="#b8b8b8"/><text transform="translate(155.6 225.84) rotate(-90)" x="0" y="0" font-size="7.3" fill="#a8a8a8" text-anchor="middle" font-family="Liberation Sans">-300</text><rect x="161" y="230.48" width="3.5" height="1" fill="#9a9a9a"/><rect x="161" y="235.63" width="3.5" height="1" fill="#9a9a9a"/><rect x="161" y="240.77" width="3.5" height="1" fill="#9a9a9a"/><rect x="161" y="245.92" width="3.5" height="1" fill="#9a9a9a"/><rect x="157.8" y="251.06" width="6.7" height="1" fill="#b8b8b8"/><text transform="translate(155.6 251.56) rotate(-90)" x="0" y="0" font-size="7.3" fill="#a8a8a8" text-anchor="middle" font-family="Liberation Sans">-200</text><rect x="161" y="256.20" width="3.5" height="1" fill="#9a9a9a"/><rect x="161" y="261.35" width="3.5" height="1" fill="#9a9a9a"/><rect x="161" y="266.49" width="3.5" height="1" fill="#9a9a9a"/><rect x="161" y="271.64" width="3.5" height="1" fill="#9a9a9a"/><rect x="157.8" y="276.78" width="6.7" height="1" fill="#b8b8b8"/><text transform="translate(155.6 277.28) rotate(-90)" x="0" y="0" font-size="7.3" fill="#a8a8a8" text-anchor="middle" font-family="Liberation Sans">-100</text><rect x="161" y="281.92" width="3.5" height="1" fill="#9a9a9a"/><rect x="161" y="287.07" width="3.5" height="1" fill="#9a9a9a"/><rect x="161" y="292.21" width="3.5" height="1" fill="#9a9a9a"/><rect x="161" y="297.36" width="3.5" height="1" fill="#9a9a9a"/><rect x="157.8" y="302.50" width="6.7" height="1" fill="#b8b8b8"/><text transform="translate(155.6 303.00) rotate(-90)" x="0" y="0" font-size="7.3" fill="#a8a8a8" text-anchor="middle" font-family="Liberation Sans">0</text><rect x="161" y="307.64" width="3.5" height="1" fill="#9a9a9a"/><rect x="161" y="312.79" width="3.5" height="1" fill="#9a9a9a"/><rect x="161" y="317.93" width="3.5" height="1" fill="#9a9a9a"/><rect x="161" y="323.08" width="3.5" height="1" fill="#9a9a9a"/><rect x="157.8" y="328.22" width="6.7" height="1" fill="#b8b8b8"/><text transform="translate(155.6 328.72) rotate(-90)" x="0" y="0" font-size="7.3" fill="#a8a8a8" text-anchor="middle" font-family="Liberation Sans">100</text><rect x="161" y="333.36" width="3.5" height="1" fill="#9a9a9a"/><rect x="161" y="338.51" width="3.5" height="1" fill="#9a9a9a"/><rect x="161" y="343.65" width="3.5" height="1" fill="#9a9a9a"/><rect x="161" y="348.80" width="3.5" height="1" fill="#9a9a9a"/><rect x="157.8" y="353.94" width="6.7" height="1" fill="#b8b8b8"/><text transform="translate(155.6 354.44) rotate(-90)" x="0" y="0" font-size="7.3" fill="#a8a8a8" text-anchor="middle" font-family="Liberation Sans">200</text><rect x="161" y="359.08" width="3.5" height="1" fill="#9a9a9a"/><rect x="161" y="364.23" width="3.5" height="1" fill="#9a9a9a"/><rect x="161" y="369.37" width="3.5" height="1" fill="#9a9a9a"/><rect x="161" y="374.52" width="3.5" height="1" fill="#9a9a9a"/><rect x="157.8" y="379.66" width="6.7" height="1" fill="#b8b8b8"/><text transform="translate(155.6 380.16) rotate(-90)" x="0" y="0" font-size="7.3" fill="#a8a8a8" text-anchor="middle" font-family="Liberation Sans">300</text><rect x="161" y="384.80" width="3.5" height="1" fill="#9a9a9a"/><rect x="161" y="389.95" width="3.5" height="1" fill="#9a9a9a"/><rect x="161" y="395.09" width="3.5" height="1" fill="#9a9a9a"/><rect x="161" y="400.24" width="3.5" height="1" fill="#9a9a9a"/><rect x="157.8" y="405.38" width="6.7" height="1" fill="#b8b8b8"/><text transform="translate(155.6 405.88) rotate(-90)" x="0" y="0" font-size="7.3" fill="#a8a8a8" text-anchor="middle" font-family="Liberation Sans">400</text><rect x="161" y="410.52" width="3.5" height="1" fill="#9a9a9a"/><rect x="161" y="415.67" width="3.5" height="1" fill="#9a9a9a"/><rect x="161" y="420.81" width="3.5" height="1" fill="#9a9a9a"/><rect x="161" y="425.96" width="3.5" height="1" fill="#9a9a9a"/><rect x="157.8" y="431.10" width="6.7" height="1" fill="#b8b8b8"/><text transform="translate(155.6 431.60) rotate(-90)" x="0" y="0" font-size="7.3" fill="#a8a8a8" text-anchor="middle" font-family="Liberation Sans">500</text><rect x="161" y="436.24" width="3.5" height="1" fill="#9a9a9a"/><rect x="161" y="441.39" width="3.5" height="1" fill="#9a9a9a"/><rect x="161" y="446.53" width="3.5" height="1" fill="#9a9a9a"/><rect x="161" y="451.68" width="3.5" height="1" fill="#9a9a9a"/><rect x="157.8" y="456.82" width="6.7" height="1" fill="#b8b8b8"/><text transform="translate(155.6 457.32) rotate(-90)" x="0" y="0" font-size="7.3" fill="#a8a8a8" text-anchor="middle" font-family="Liberation Sans">600</text><rect x="161" y="461.96" width="3.5" height="1" fill="#9a9a9a"/><rect x="161" y="467.11" width="3.5" height="1" fill="#9a9a9a"/><rect x="161" y="472.25" width="3.5" height="1" fill="#9a9a9a"/><rect x="161" y="477.40" width="3.5" height="1" fill="#9a9a9a"/><rect x="157.8" y="482.54" width="6.7" height="1" fill="#b8b8b8"/><text transform="translate(155.6 483.04) rotate(-90)" x="0" y="0" font-size="7.3" fill="#a8a8a8" text-anchor="middle" font-family="Liberation Sans">700</text><rect x="161" y="487.68" width="3.5" height="1" fill="#9a9a9a"/><rect x="161" y="492.83" width="3.5" height="1" fill="#9a9a9a"/><rect x="161" y="497.97" width="3.5" height="1" fill="#9a9a9a"/><rect x="161" y="503.12" width="3.5" height="1" fill="#9a9a9a"/><rect x="157.8" y="508.26" width="6.7" height="1" fill="#b8b8b8"/><text transform="translate(155.6 508.76) rotate(-90)" x="0" y="0" font-size="7.3" fill="#a8a8a8" text-anchor="middle" font-family="Liberation Sans">800</text><rect x="161" y="513.40" width="3.5" height="1" fill="#9a9a9a"/><rect x="161" y="518.55" width="3.5" height="1" fill="#9a9a9a"/><rect x="161" y="523.69" width="3.5" height="1" fill="#9a9a9a"/><rect x="161" y="528.84" width="3.5" height="1" fill="#9a9a9a"/><rect x="157.8" y="533.98" width="6.7" height="1" fill="#b8b8b8"/><text transform="translate(155.6 534.48) rotate(-90)" x="0" y="0" font-size="7.3" fill="#a8a8a8" text-anchor="middle" font-family="Liberation Sans">900</text><rect x="161" y="539.12" width="3.5" height="1" fill="#9a9a9a"/><rect x="161" y="544.27" width="3.5" height="1" fill="#9a9a9a"/><rect x="161" y="549.41" width="3.5" height="1" fill="#9a9a9a"/><rect x="161" y="554.56" width="3.5" height="1" fill="#9a9a9a"/><rect x="157.8" y="559.70" width="6.7" height="1" fill="#b8b8b8"/><text transform="translate(155.6 560.20) rotate(-90)" x="0" y="0" font-size="7.3" fill="#a8a8a8" text-anchor="middle" font-family="Liberation Sans">1000</text><rect x="161" y="564.84" width="3.5" height="1" fill="#9a9a9a"/><rect x="161" y="569.99" width="3.5" height="1" fill="#9a9a9a"/><rect x="161" y="575.13" width="3.5" height="1" fill="#9a9a9a"/><rect x="161" y="580.28" width="3.5" height="1" fill="#9a9a9a"/><rect x="157.8" y="585.42" width="6.7" height="1" fill="#b8b8b8"/><text transform="translate(155.6 585.92) rotate(-90)" x="0" y="0" font-size="7.3" fill="#a8a8a8" text-anchor="middle" font-family="Liberation Sans">1100</text><rect x="161" y="590.56" width="3.5" height="1" fill="#9a9a9a"/><rect x="161" y="595.71" width="3.5" height="1" fill="#9a9a9a"/><rect x="161" y="600.85" width="3.5" height="1" fill="#9a9a9a"/><rect x="161" y="606.00" width="3.5" height="1" fill="#9a9a9a"/><rect x="157.8" y="611.14" width="6.7" height="1" fill="#b8b8b8"/><text transform="translate(155.6 611.64) rotate(-90)" x="0" y="0" font-size="7.3" fill="#a8a8a8" text-anchor="middle" font-family="Liberation Sans">1200</text><rect x="161" y="616.28" width="3.5" height="1" fill="#9a9a9a"/><rect x="161" y="621.43" width="3.5" height="1" fill="#9a9a9a"/><rect x="161" y="626.57" width="3.5" height="1" fill="#9a9a9a"/><rect x="161" y="631.72" width="3.5" height="1" fill="#9a9a9a"/><rect x="157.8" y="636.86" width="6.7" height="1" fill="#b8b8b8"/><text transform="translate(155.6 637.36) rotate(-90)" x="0" y="0" font-size="7.3" fill="#a8a8a8" text-anchor="middle" font-family="Liberation Sans">1300</text><rect x="161" y="642.00" width="3.5" height="1" fill="#9a9a9a"/><rect x="161" y="647.15" width="3.5" height="1" fill="#9a9a9a"/><rect x="161" y="652.29" width="3.5" height="1" fill="#9a9a9a"/><rect x="161" y="657.44" width="3.5" height="1" fill="#9a9a9a"/><rect x="157.8" y="662.58" width="6.7" height="1" fill="#b8b8b8"/><text transform="translate(155.6 663.08) rotate(-90)" x="0" y="0" font-size="7.3" fill="#a8a8a8" text-anchor="middle" font-family="Liberation Sans">1400</text><rect x="161" y="667.72" width="3.5" height="1" fill="#9a9a9a"/><rect x="161" y="672.87" width="3.5" height="1" fill="#9a9a9a"/><rect x="161" y="678.01" width="3.5" height="1" fill="#9a9a9a"/><rect x="161" y="683.16" width="3.5" height="1" fill="#9a9a9a"/><rect x="157.8" y="688.30" width="6.7" height="1" fill="#b8b8b8"/><text transform="translate(155.6 688.80) rotate(-90)" x="0" y="0" font-size="7.3" fill="#a8a8a8" text-anchor="middle" font-family="Liberation Sans">1500</text><rect x="161" y="693.44" width="3.5" height="1" fill="#9a9a9a"/><rect x="161" y="698.59" width="3.5" height="1" fill="#9a9a9a"/><rect x="161" y="703.73" width="3.5" height="1" fill="#9a9a9a"/><rect x="161" y="708.88" width="3.5" height="1" fill="#9a9a9a"/><rect x="157.8" y="714.02" width="6.7" height="1" fill="#b8b8b8"/><text transform="translate(155.6 714.52) rotate(-90)" x="0" y="0" font-size="7.3" fill="#a8a8a8" text-anchor="middle" font-family="Liberation Sans">1600</text><rect x="161" y="719.16" width="3.5" height="1" fill="#9a9a9a"/><rect x="161" y="724.31" width="3.5" height="1" fill="#9a9a9a"/><rect x="161" y="729.45" width="3.5" height="1" fill="#9a9a9a"/><rect x="161" y="734.60" width="3.5" height="1" fill="#9a9a9a"/><rect x="157.8" y="739.74" width="6.7" height="1" fill="#b8b8b8"/><text transform="translate(155.6 740.24) rotate(-90)" x="0" y="0" font-size="7.3" fill="#a8a8a8" text-anchor="middle" font-family="Liberation Sans">1700</text><rect x="161" y="744.88" width="3.5" height="1" fill="#9a9a9a"/><rect x="161" y="750.03" width="3.5" height="1" fill="#9a9a9a"/><rect x="161" y="755.17" width="3.5" height="1" fill="#9a9a9a"/><rect x="161" y="760.32" width="3.5" height="1" fill="#9a9a9a"/><rect x="157.8" y="765.46" width="6.7" height="1" fill="#b8b8b8"/><text transform="translate(155.6 765.96) rotate(-90)" x="0" y="0" font-size="7.3" fill="#a8a8a8" text-anchor="middle" font-family="Liberation Sans">1800</text><rect x="161" y="770.60" width="3.5" height="1" fill="#9a9a9a"/><rect x="161" y="775.75" width="3.5" height="1" fill="#9a9a9a"/></svg>
<div class="t" style="left:152px;top:108.07px;font-size:7px;line-height:7px;color:#999;">px</div>
<div class="a" style="left:345px;top:101px;width:1px;height:16px;background:#d8d8d8;"></div>
<div class="a" style="left:148.7px;top:458px;width:15.5px;height:1px;background:#d8d8d8;"></div>
<svg style="left:1195px;top:105.8px" width="6" height="5.5" viewBox="0 0 6 5.5"><path d="M3 0 L6 5.5 H0Z" fill="#8a8a8a"/></svg>
<svg style="left:1194.5px;top:769.5px" width="7" height="6" viewBox="0 0 7 6"><path d="M0.2 0.2 H6.8 L3.5 5.8Z" fill="#8a8a8a"/></svg>
<svg style="left:152px;top:783px" width="7" height="8" viewBox="0 0 7 8"><path d="M6.5 0.5 V7.5 L0.5 4Z" fill="#8a8a8a"/></svg>
<svg style="left:1181px;top:784px" width="6" height="7" viewBox="0 0 6 7"><path d="M0.2 0.2 V6.8 L5.8 3.5Z" fill="#8a8a8a"/></svg>
<div class="a" style="left:1195px;top:328px;width:6px;height:224px;background:#838383;border-radius:3px"></div>
<div class="a" style="left:477.3px;top:784.2px;width:341.5px;height:5.8px;background:#838383;border-radius:3px"></div>
<div class="t" style="left:12.5px;top:800.03px;font-size:10px;line-height:10px;color:#e0e0e0;letter-spacing:-0.3px"><b>Drag</b> to marquee select. <b>Click</b> an object to select it.</div>
<div class="a" style="left:3px;top:112px;width:142px;height:1px;background:#2a2a2a;"></div>
<div class="a" style="left:3px;top:113px;width:142px;height:1px;background:#484848;"></div>
<div class="a" style="left:3px;top:147px;width:142px;height:1px;background:#2a2a2a;"></div>
<div class="a" style="left:3px;top:148px;width:142px;height:1px;background:#484848;"></div>
<div class="a" style="left:3px;top:203px;width:142px;height:1px;background:#2a2a2a;"></div>
<div class="a" style="left:3px;top:204px;width:142px;height:1px;background:#484848;"></div>
<div class="a" style="left:3px;top:238px;width:142px;height:1px;background:#2a2a2a;"></div>
<div class="a" style="left:3px;top:239px;width:142px;height:1px;background:#484848;"></div>
<div class="a" style="left:3px;top:272px;width:142px;height:1px;background:#2a2a2a;"></div>
<div class="a" style="left:3px;top:273px;width:142px;height:1px;background:#484848;"></div>
<div class="a" style="left:3px;top:327px;width:142px;height:1px;background:#2a2a2a;"></div>
<div class="a" style="left:3px;top:328px;width:142px;height:1px;background:#484848;"></div>
<div class="a" style="left:3px;top:363px;width:142px;height:1px;background:#2a2a2a;"></div>
<div class="a" style="left:3px;top:364px;width:142px;height:1px;background:#484848;"></div>
<div class="a" style="left:3px;top:397px;width:142px;height:1px;background:#2a2a2a;"></div>
<div class="a" style="left:3px;top:398px;width:142px;height:1px;background:#484848;"></div>
<div class="a" style="left:3px;top:431px;width:142px;height:1px;background:#2a2a2a;"></div>
<div class="a" style="left:3px;top:432px;width:142px;height:1px;background:#484848;"></div>
<div class="a" style="left:3px;top:466px;width:142px;height:1px;background:#2a2a2a;"></div>
<div class="a" style="left:3px;top:467px;width:142px;height:1px;background:#484848;"></div>
<div class="a" style="left:3px;top:500px;width:142px;height:1px;background:#2a2a2a;"></div>
<div class="a" style="left:3px;top:501px;width:142px;height:1px;background:#484848;"></div>
<div class="a" style="left:3px;top:600px;width:142px;height:1px;background:#2a2a2a;"></div>
<div class="a" style="left:3px;top:601px;width:142px;height:1px;background:#484848;"></div>
<div class="a" style="left:3px;top:657px;width:142px;height:1px;background:#2a2a2a;"></div>
<div class="a" style="left:3px;top:658px;width:142px;height:1px;background:#484848;"></div>
<div class="a" style="left:3px;top:735px;width:142px;height:1px;background:#2a2a2a;"></div>
<div class="a" style="left:3px;top:736px;width:142px;height:1px;background:#484848;"></div>
<div class="a" style="left:147.5px;top:84px;width:1.5px;height:709px;background:#2c2c2c;"></div>
<div class="a" style="left:4px;top:85px;width:22px;height:22px;background:#262626;border-radius:3px"></div>
<svg style="left:9.5px;top:88.5px" width="12" height="15" viewBox="0 0 12 15"><path d="M1.5 1 L1.5 11.5 L4.2 9 L6.5 13.5 L8.3 12.6 L6.2 8.3 L9.8 8.1Z" fill="#303030" stroke="#e0e0e0" stroke-width="1"/></svg>
<svg style="left:40.0px;top:91.0px" width="9" height="10" viewBox="0 0 9 10"><path d="M0.5 0.5 L0.5 9 L2.8 7 L8 4.6Z" fill="#f4f4f4" stroke="#222" stroke-width="0.4"/></svg>
<div class="t" style="left:9.0px;top:123.28px;font-size:15.5px;line-height:15.5px;color:#e8e8e8;font-family:'Liberation Serif';">A</div>
<div class="a" style="left:37.2px;top:123.2px;width:14.8px;height:14.8px;background:#cfcfcf;border:1px solid #a8a8a8;box-shadow:inset 0 0 0 1px #3a3a3a;border-radius:1.5px"></div>
<div class="a" style="left:39.2px;top:125.2px;width:10.8px;height:10.8px;background:#dcdcdc;"></div>
<div class="t" style="left:40.5px;top:123.37px;font-size:13.5px;line-height:13.5px;color:#000;font-family:'Liberation Serif';">T</div>
<svg style="left:7.0px;top:157.0px" width="16" height="16" viewBox="0 0 16 16"><path d="M1 15 L3.5 8 L8 5 L11 8 L8 12.5Z" fill="#f4c860" stroke="#8a6020" stroke-width="0.6"/><path d="M8 5 L12.5 0.5 L15.5 3.5 L11 8Z" fill="#e8e8e8"/><path d="M11 2 L14 5 L15.5 3.5 L12.5 0.5Z" fill="#c04040"/><circle cx="5.5" cy="10.5" r="1" fill="#8a6020"/></svg>
<svg style="left:36.5px;top:157.0px" width="16" height="16" viewBox="0 0 16 16"><path d="M9.5 6.5 L14.5 0.8 L15.5 1.8 L10.5 7.5Z" fill="#e03838"/><path d="M8.6 5.6 L10.4 7.4 L11.2 6.6 L9.4 4.8Z" fill="#ddd"/><path d="M8.8 6 C6 6.2 4.2 8.8 3.5 11.5 C3 13.5 2 14.5 1 15 C4.5 15.2 8.5 13.5 10 9.5 Z" fill="#b8763a"/></svg>
<svg style="left:66.0px;top:157.0px" width="16" height="16" viewBox="0 0 16 16"><path d="M4 14 A6 6 0 0 1 2.5 5 " stroke="#8a40e0" stroke-width="3" fill="none"/><path d="M3 13 A6 6 0 0 0 9 14" stroke="#30d080" stroke-width="3" fill="none"/><path d="M9.5 6.5 L14.5 0.8 L15.5 1.8 L10.5 7.5Z" fill="#e03838"/><path d="M8.6 5.6 L10.4 7.4 L11.2 6.6 L9.4 4.8Z" fill="#ddd"/><path d="M8.8 6 C6 6.2 4.2 8.8 3.5 11.5 C3 13.5 2 14.5 1 15 C4.5 15.2 8.5 13.5 10 9.5 Z" fill="#b8763a"/></svg>
<svg style="left:95.5px;top:157.0px" width="16" height="16" viewBox="0 0 16 16"><path d="M5 15 A6.5 6.5 0 0 1 4 3" stroke="#e040a0" stroke-width="2.6" fill="none"/><path d="M5 15 Q9 16 12 14" stroke="#30b0d0" stroke-width="1.6" fill="none"/><path d="M9.5 6.5 L14.5 0.8 L15.5 1.8 L10.5 7.5Z" fill="#e03838"/><path d="M8.6 5.6 L10.4 7.4 L11.2 6.6 L9.4 4.8Z" fill="#ddd"/><path d="M8.8 6 C6 6.2 4.2 8.8 3.5 11.5 C3 13.5 2 14.5 1 15 C4.5 15.2 8.5 13.5 10 9.5 Z" fill="#b8763a"/></svg>
<svg style="left:125.0px;top:157.0px" width="16" height="16" viewBox="0 0 16 16"><path d="M1 7 A7 7 0 0 1 7 2" stroke="#8ab0d8" stroke-width="1.5" fill="none"/><path d="M15 9 A7 7 0 0 1 9 15" stroke="#8ab0d8" stroke-width="1.5" fill="none"/><path d="M9.5 6.5 L14.5 0.8 L15.5 1.8 L10.5 7.5Z" fill="#e03838"/><path d="M8.6 5.6 L10.4 7.4 L11.2 6.6 L9.4 4.8Z" fill="#ddd"/><path d="M8.8 6 C6 6.2 4.2 8.8 3.5 11.5 C3 13.5 2 14.5 1 15 C4.5 15.2 8.5 13.5 10 9.5 Z" fill="#b8763a"/></svg>
<svg style="left:9.0px;top:181.0px" width="12" height="12" viewBox="0 0 12 12"><rect x="0.5" y="0.5" width="2.6" height="2.6" fill="#555"/><rect x="0.5" y="4.5" width="2.6" height="2.6" fill="#555"/><rect x="0.5" y="8.5" width="2.6" height="2.6" fill="#555"/><rect x="4.5" y="0.5" width="2.6" height="2.6" fill="#555"/><rect x="4.5" y="4.5" width="2.6" height="2.6" fill="#555"/><rect x="4.5" y="8.5" width="2.6" height="2.6" fill="#555"/><rect x="8.5" y="0.5" width="2.6" height="2.6" fill="#555"/><rect x="8.5" y="4.5" width="2.6" height="2.6" fill="#555"/><rect x="8.5" y="8.5" width="2.6" height="2.6" fill="#555"/><rect x="4.5" y="4.5" width="2.6" height="2.6" fill="#3a9cf8"/></svg>
<svg style="left:8.0px;top:214.0px" width="14" height="14" viewBox="0 0 14 14"><path d="M6.5 7 L9.60 1.63 A6.2 6.2 0 0 1 10.55 2.31Z" fill="#e83030"/><path d="M6.5 7 L10.49 2.25 A6.2 6.2 0 0 1 11.30 3.08Z" fill="#e84f30"/><path d="M6.5 7 L11.25 3.01 A6.2 6.2 0 0 1 11.91 3.98Z" fill="#e86d30"/><path d="M6.5 7 L11.87 3.90 A6.2 6.2 0 0 1 12.36 4.96Z" fill="#e88c30"/><path d="M6.5 7 L12.33 4.88 A6.2 6.2 0 0 1 12.62 6.01Z" fill="#e8aa30"/><path d="M6.5 7 L12.61 5.92 A6.2 6.2 0 0 1 12.70 7.09Z" fill="#e8c930"/><path d="M6.5 7 L12.70 7.00 A6.2 6.2 0 0 1 12.59 8.16Z" fill="#e8e830"/><path d="M6.5 7 L12.61 8.08 A6.2 6.2 0 0 1 12.30 9.20Z" fill="#c9e830"/><path d="M6.5 7 L12.33 9.12 A6.2 6.2 0 0 1 11.83 10.17Z" fill="#aae830"/><path d="M6.5 7 L11.87 10.10 A6.2 6.2 0 0 1 11.19 11.05Z" fill="#8ce830"/><path d="M6.5 7 L11.25 10.99 A6.2 6.2 0 0 1 10.42 11.80Z" fill="#6de830"/><path d="M6.5 7 L10.49 11.75 A6.2 6.2 0 0 1 9.52 12.41Z" fill="#4fe830"/><path d="M6.5 7 L9.60 12.37 A6.2 6.2 0 0 1 8.54 12.86Z" fill="#30e830"/><path d="M6.5 7 L8.62 12.83 A6.2 6.2 0 0 1 7.49 13.12Z" fill="#30e84f"/><path d="M6.5 7 L7.58 13.11 A6.2 6.2 0 0 1 6.41 13.20Z" fill="#30e86d"/><path d="M6.5 7 L6.50 13.20 A6.2 6.2 0 0 1 5.34 13.09Z" fill="#30e88c"/><path d="M6.5 7 L5.42 13.11 A6.2 6.2 0 0 1 4.30 12.80Z" fill="#30e8aa"/><path d="M6.5 7 L4.38 12.83 A6.2 6.2 0 0 1 3.33 12.33Z" fill="#30e8c9"/><path d="M6.5 7 L3.40 12.37 A6.2 6.2 0 0 1 2.45 11.69Z" fill="#30e8e8"/><path d="M6.5 7 L2.51 11.75 A6.2 6.2 0 0 1 1.70 10.92Z" fill="#30c9e8"/><path d="M6.5 7 L1.75 10.99 A6.2 6.2 0 0 1 1.09 10.02Z" fill="#30aae8"/><path d="M6.5 7 L1.13 10.10 A6.2 6.2 0 0 1 0.64 9.04Z" fill="#308ce8"/><path d="M6.5 7 L0.67 9.12 A6.2 6.2 0 0 1 0.38 7.99Z" fill="#306de8"/><path d="M6.5 7 L0.39 8.08 A6.2 6.2 0 0 1 0.30 6.91Z" fill="#304fe8"/><path d="M6.5 7 L0.30 7.00 A6.2 6.2 0 0 1 0.41 5.84Z" fill="#3030e8"/><path d="M6.5 7 L0.39 5.92 A6.2 6.2 0 0 1 0.70 4.80Z" fill="#4f30e8"/><path d="M6.5 7 L0.67 4.88 A6.2 6.2 0 0 1 1.17 3.83Z" fill="#6d30e8"/><path d="M6.5 7 L1.13 3.90 A6.2 6.2 0 0 1 1.81 2.95Z" fill="#8c30e8"/><path d="M6.5 7 L1.75 3.01 A6.2 6.2 0 0 1 2.58 2.20Z" fill="#aa30e8"/><path d="M6.5 7 L2.51 2.25 A6.2 6.2 0 0 1 3.48 1.59Z" fill="#c930e8"/><path d="M6.5 7 L3.40 1.63 A6.2 6.2 0 0 1 4.46 1.14Z" fill="#e830e8"/><path d="M6.5 7 L4.38 1.17 A6.2 6.2 0 0 1 5.51 0.88Z" fill="#e830c9"/><path d="M6.5 7 L5.42 0.89 A6.2 6.2 0 0 1 6.59 0.80Z" fill="#e830aa"/><path d="M6.5 7 L6.50 0.80 A6.2 6.2 0 0 1 7.66 0.91Z" fill="#e8308c"/><path d="M6.5 7 L7.58 0.89 A6.2 6.2 0 0 1 8.70 1.20Z" fill="#e8306d"/><path d="M6.5 7 L8.62 1.17 A6.2 6.2 0 0 1 9.67 1.67Z" fill="#e8304f"/><circle cx="6.5" cy="7" r="2.3" fill="#fff" opacity="0.3"/><path d="M5.5 8 L12.5 1.2" stroke="#ddd" stroke-width="1"/><circle cx="12.6" cy="1.3" r="1.2" fill="#eee"/><circle cx="6" cy="7.5" r="1.2" fill="#222" stroke="#ddd" stroke-width="0.6"/></svg>
<svg style="left:37.5px;top:214.5px" width="14" height="14" viewBox="0 0 14 14"><path d="M3 0 V11 H14 M0 3 H11 V14 M1 13 L13 1" stroke="#b0b0b0" stroke-width="1.2" fill="none"/></svg>
<div class="a" style="left:9px;top:250px;width:11.5px;height:11.5px;background:#3a8fdc;"></div>
<div class="a" style="left:39px;top:250px;width:11.5px;height:11.5px;background:#3a8fdc;border-radius:3px"></div>
<div class="a" style="left:68.5px;top:250px;width:11.5px;height:11.5px;background:#3a8fdc;border-radius:50%"></div>
<div class="a" style="left:98px;top:250px;width:11.5px;height:11.5px;background:#3a8fdc;"></div>
<svg style="left:109.0px;top:261.0px" width="4" height="4" viewBox="0 0 4 4"><path d="M4 0 V4 H0Z" fill="#eee"/></svg>
<svg style="left:8.0px;top:283.0px" width="14" height="14" viewBox="0 0 14 14"><rect x="0.5" y="0.5" width="13" height="13" fill="none" stroke="#c8c8c8" stroke-width="1" stroke-dasharray="1.6 1.6"/></svg>
<svg style="left:37.5px;top:283.0px" width="14" height="14" viewBox="0 0 14 14"><circle cx="7" cy="7" r="6.5" fill="none" stroke="#c8c8c8" stroke-width="1" stroke-dasharray="1.6 1.6"/></svg>
<svg style="left:72.0px;top:283.0px" width="5" height="14" viewBox="0 0 5 14"><rect x="0.5" y="0.5" width="4" height="13" fill="none" stroke="#c8c8c8" stroke-width="1" stroke-dasharray="1.6 1.6"/></svg>
<svg style="left:96.5px;top:287.5px" width="14" height="5" viewBox="0 0 14 5"><rect x="0.5" y="0.5" width="13" height="4" fill="none" stroke="#c8c8c8" stroke-width="1" stroke-dasharray="1.6 1.6"/></svg>
<svg style="left:125.5px;top:283.0px" width="15" height="14" viewBox="0 0 15 14"><ellipse cx="7.5" cy="5.5" rx="6.8" ry="4.5" fill="none" stroke="#e08a30" stroke-width="1.3"/><path d="M9 9.5 L11 13" stroke="#e08a30" stroke-width="1.2"/></svg>
<svg style="left:7.0px;top:304.0px" width="16" height="16" viewBox="0 0 16 16"><circle cx="4.5" cy="11" r="3.8" fill="none" stroke="#ccc" stroke-width="0.8" stroke-dasharray="1.2 1"/><path d="M9.5 6.5 L14.5 0.8 L15.5 1.8 L10.5 7.5Z" fill="#e03838"/><path d="M8.6 5.6 L10.4 7.4 L11.2 6.6 L9.4 4.8Z" fill="#ddd"/><path d="M8.8 6 C6 6.2 4.2 8.8 3.5 11.5 C3 13.5 2 14.5 1 15 C4.5 15.2 8.5 13.5 10 9.5 Z" fill="#b8763a"/></svg>
<svg style="left:37.5px;top:305.0px" width="14" height="14" viewBox="0 0 14 14"><path d="M3 3 L13 13" stroke="#ddd" stroke-width="1.3"/><path d="M3 3 L6 5.5" stroke="#222" stroke-width="1.6"/><path d="M1 1 L5 4 M0 4 L4 2 M8 0 L7 3" stroke="#f0c020" stroke-width="1"/></svg>
<svg style="left:7.0px;top:338.0px" width="16" height="16" viewBox="0 0 16 16"><path d="M4 4 L13 2 L15 12 L7 15Z" fill="#c8c8c8" stroke="#777" stroke-width="0.6"/><path d="M4 4 C1 7 1 12 2 15" stroke="#1a80e0" stroke-width="2.5" fill="none"/></svg>
<svg style="left:36.5px;top:338.0px" width="16" height="16" viewBox="0 0 16 16"><path d="M2 11 L11 2 L14 5 L5 14Z" fill="#eaeaea" stroke="#aaa" stroke-width="0.5"/><path d="M11 2 L13.5 0.5 L15.5 2.5 L14 5Z" fill="#f0b030"/><path d="M2 11 L5 14 L3.5 15.5 L0.5 12.5Z" fill="#e05060"/><path d="M4 9 L7 12 M6 7 L9 10 M8 5 L11 8" stroke="#bbb" stroke-width="0.6"/></svg>
<svg style="left:66.0px;top:338.0px" width="16" height="16" viewBox="0 0 16 16"><rect x="0" y="7.5" width="2.5" height="2.5" fill="#444"/><rect x="0" y="10" width="2.5" height="2.5" fill="#ddd"/><rect x="0" y="12.5" width="2.5" height="2.5" fill="#444"/><rect x="2.5" y="7.5" width="2.5" height="2.5" fill="#ddd"/><rect x="2.5" y="10" width="2.5" height="2.5" fill="#444"/><rect x="2.5" y="12.5" width="2.5" height="2.5" fill="#ddd"/><rect x="5" y="7.5" width="2.5" height="2.5" fill="#444"/><rect x="5" y="10" width="2.5" height="2.5" fill="#ddd"/><rect x="5" y="12.5" width="2.5" height="2.5" fill="#444"/><rect x="7.5" y="7.5" width="2.5" height="2.5" fill="#ddd"/><rect x="7.5" y="10" width="2.5" height="2.5" fill="#444"/><rect x="7.5" y="12.5" width="2.5" height="2.5" fill="#ddd"/><path d="M2 11 L11 2 L14 5 L5 14Z" fill="#eaeaea" stroke="#aaa" stroke-width="0.5"/><path d="M11 2 L13.5 0.5 L15.5 2.5 L14 5Z" fill="#f0b030"/><path d="M2 11 L5 14 L3.5 15.5 L0.5 12.5Z" fill="#e05060"/><path d="M4 9 L7 12 M6 7 L9 10 M8 5 L11 8" stroke="#bbb" stroke-width="0.6"/></svg>
<svg style="left:95.5px;top:338.0px" width="16" height="16" viewBox="0 0 16 16"><path d="M0 13 L6 9 L16 11 L12 16 L2 16Z" fill="#1a88e0"/><path d="M2 11 L11 2 L14 5 L5 14Z" fill="#eaeaea" stroke="#aaa" stroke-width="0.5"/><path d="M11 2 L13.5 0.5 L15.5 2.5 L14 5Z" fill="#f0b030"/><path d="M2 11 L5 14 L3.5 15.5 L0.5 12.5Z" fill="#e05060"/><path d="M4 9 L7 12 M6 7 L9 10 M8 5 L11 8" stroke="#bbb" stroke-width="0.6"/></svg>
<svg style="left:7.5px;top:373.5px" width="15" height="15" viewBox="0 0 15 15"><circle cx="6" cy="6" r="5" fill="#8a9aa8" stroke="#bcc8d0" stroke-width="0.8"/><path d="M9.5 9.5 L14 14" stroke="#8a9aa8" stroke-width="1.6"/></svg>
<svg style="left:36.5px;top:373.0px" width="16" height="16" viewBox="0 0 16 16"><path d="M7.5 1 C10 4 13 6 13 10 C13 13.5 10.5 15.5 7.5 15.5 C4.5 15.5 2 13.5 2 10 C2 7.5 4 6 4.5 4 C5.5 6 6 7 6 7 C6.5 5 7 3 7.5 1Z" fill="#f04010"/><path d="M7.5 7 C9 9 11 10 10.5 12.5 C10 14.5 5 14.5 4.8 12.2 C4.8 10.5 6 10 7.5 7Z" fill="#ffb020"/></svg>
<svg style="left:66.0px;top:373.0px" width="16" height="16" viewBox="0 0 16 16"><path d="M1 8 L10 3 L15 6 L15 10 L6 15 L1 12Z" fill="#f0d050" stroke="#c89a20" stroke-width="0.7"/><path d="M1 8 L6 11 L15 6" stroke="#c89a20" stroke-width="0.7" fill="none"/></svg>
<svg style="left:95.5px;top:373.0px" width="16" height="16" viewBox="0 0 16 16"><circle cx="7.5" cy="3.5" r="3" fill="#2a7ae0"/><rect x="6.5" y="5" width="2" height="5" fill="#1a60c0"/><path d="M1 11 H14 L15 15 H0Z" fill="#e8c8a0" stroke="#a87040" stroke-width="0.6"/><path d="M2 10 H13 V12 H2Z" fill="#c89060"/></svg>
<svg style="left:10.2px;top:409.5px" width="9" height="13" viewBox="0 0 9 13"><path d="M4.5 0.5 C6 3 8.8 5.5 8.8 8 A4.3 4.3 0 0 1 0.2 8 C0.2 5.5 3 3 4.5 0.5Z" fill="#c0dcea" stroke="#8ab0c8" stroke-width="0.5"/></svg>
<svg style="left:40.0px;top:409.75px" width="9" height="12.5" viewBox="0 0 9 12.5"><path d="M4.5 0.3 L8.7 12 H0.3Z" fill="#b8d4e0" stroke="#8aa8b8" stroke-width="0.5"/></svg>
<svg style="left:68.4px;top:408.75px" width="11.6" height="13.5" viewBox="0 0 11.6 13.5"><path d="M5.8 0.5 V12.5 M2.5 12.5 H9 M0.8 3 H10.8" stroke="#d89a20" stroke-width="1.1"/><path d="M0 7.5 Q2 9.5 4 7.5 L2 3.5Z M7.6 7.5 Q9.6 9.5 11.6 7.5 L9.6 3.5Z" fill="#e0a020"/></svg>
<svg style="left:96.5px;top:408.0px" width="14" height="14" viewBox="0 0 14 14"><path d="M1 13.5 C3 11.5 5 11.5 5 8.5 C2.5 6.5 3.5 0.8 8 0.8 C12.5 0.8 13.5 5.5 11.8 8 C10 10 7.5 9.5 5.5 11.5 C4 13 2.5 13.5 1 13.5Z" fill="#e4b888" stroke="#b88050" stroke-width="0.5"/></svg>
<svg style="left:7.0px;top:442.0px" width="16" height="16" viewBox="0 0 16 16"><path d="M1.5 11 L11 1.5 L14.5 5 L5 14.5Z" fill="#f4a070"/><rect x="6" y="6" width="4" height="4" transform="rotate(45 8 8)" fill="#fad8c0"/></svg>
<svg style="left:36.5px;top:442.0px" width="16" height="16" viewBox="0 0 16 16"><path d="M8 0.5 L15.5 8 L8 15.5 L0.5 8Z" fill="#f4a070"/><path d="M8 4 L12 8 L8 12 L4 8Z" fill="#fad8c0"/></svg>
<svg style="left:66.0px;top:442.0px" width="16" height="16" viewBox="0 0 16 16"><path d="M1.5 11 L11 1.5 L14.5 5 L5 14.5Z" fill="#f4a070"/><rect x="6" y="6" width="4" height="4" transform="rotate(45 8 8)" fill="#fad8c0"/><path d="M3 6 A5 5 0 0 1 9 1" stroke="#ddd" stroke-width="0.8" fill="none"/></svg>
<svg style="left:95.5px;top:442.0px" width="16" height="16" viewBox="0 0 16 16"><circle cx="4.5" cy="11" r="4" fill="none" stroke="#ddd" stroke-width="1"/><path d="M9.5 6.5 L14.5 0.8 L15.5 1.8 L10.5 7.5Z" fill="#e03838"/><path d="M8.6 5.6 L10.4 7.4 L11.2 6.6 L9.4 4.8Z" fill="#ddd"/><path d="M8.8 6 C6 6.2 4.2 8.8 3.5 11.5 C3 13.5 2 14.5 1 15 C4.5 15.2 8.5 13.5 10 9.5 Z" fill="#b8763a"/></svg>
<svg style="left:125.0px;top:442.0px" width="16" height="16" viewBox="0 0 16 16"><path d="M0.5 8 Q8 1 15.5 8 Q8 15 0.5 8Z" fill="#f0f0f0"/><circle cx="8" cy="8" r="3.6" fill="#c02030"/><circle cx="8" cy="8" r="1.5" fill="#400"/></svg>
<svg style="left:7.0px;top:476.0px" width="16" height="16" viewBox="0 0 16 16"><path d="M3 2 Q8 0 13 2 L14 13 Q8 15 1 14Z" fill="none" stroke="#b8c0d0" stroke-width="0.9"/><path d="M2 6 Q8 4 14 6 M1.5 10 Q8 8 14 10 M6 1 Q5 8 5 14 M10 1 Q11 8 10 14" stroke="#b8c0d0" stroke-width="0.8" fill="none"/></svg>
<svg style="left:36.5px;top:476.0px" width="16" height="16" viewBox="0 0 16 16"><path d="M3 2 H13 L14 14 H2Z" fill="none" stroke="#8890a8" stroke-width="0.9"/><path d="M2.5 6 H13.5 M2.2 10 H13.8 M6 2 V14 M10 2 V14" stroke="#8890a8" stroke-width="0.8" fill="none"/></svg>
<svg style="left:8.0px;top:511.0px" width="14" height="14" viewBox="0 0 14 14"><defs><radialGradient id="g1" cx="0.4" cy="0.35" r="0.7"><stop offset="0" stop-color="#f0fff0"/><stop offset="0.5" stop-color="#60c090"/><stop offset="1" stop-color="#6a70d0"/></radialGradient></defs><circle cx="7" cy="7" r="6.5" fill="url(#g1)"/></svg>
<svg style="left:37.5px;top:511.0px" width="14" height="14" viewBox="0 0 14 14"><defs><linearGradient id="g2" x1="0" y1="0" x2="0" y2="1"><stop offset="0" stop-color="#fff0c0"/><stop offset="0.5" stop-color="#f0a040"/><stop offset="1" stop-color="#f04010"/></linearGradient></defs><circle cx="7" cy="7" r="6.5" fill="url(#g2)"/></svg>
<svg style="left:67.0px;top:511.0px" width="14" height="14" viewBox="0 0 14 14"><path d="M7 0.5 L13.5 3.5 V10.5 L7 13.5 L0.5 10.5 V3.5Z" fill="#4aa0d8"/><path d="M0.5 3.5 L7 6.5 L13.5 3.5 L7 0.5Z" fill="#a8e0f8"/><path d="M7 6.5 V13.5 L13.5 10.5 V3.5Z" fill="#2a78b8"/></svg>
<svg style="left:96.5px;top:511.0px" width="14" height="14" viewBox="0 0 14 14"><circle cx="7" cy="7" r="6.5" fill="#b0b0b0"/><path d="M1 5 L13 9 M3 2 L11 12" stroke="#444" stroke-width="1.5"/><circle cx="7" cy="7" r="1.6" fill="#2a70c0"/></svg>
<svg style="left:126.0px;top:511.0px" width="14" height="14" viewBox="0 0 14 14"><circle cx="7" cy="7" r="6.5" fill="#3a3a3a" stroke="#555" stroke-width="0.8"/><circle cx="7" cy="7" r="4.2" fill="none" stroke="#888" stroke-width="0.8"/><circle cx="7" cy="7" r="2.3" fill="#f4f4f4"/></svg>
<svg style="left:8.0px;top:533.0px" width="14" height="14" viewBox="0 0 14 14"><circle cx="7" cy="7" r="6.5" fill="#3a7a80" stroke="#5ab0b8" stroke-width="1"/><path d="M4 4 L10 10 M10 4 L4 10" stroke="#c8e8f0" stroke-width="1.8"/></svg>
<svg style="left:37.5px;top:533.0px" width="14" height="14" viewBox="0 0 14 14"><circle cx="7" cy="7" r="6.3" fill="#e8f0f8"/><circle cx="7" cy="7" r="3.5" fill="#333"/><path d="M7 1 L9 5 M13 7 L9 8 M8 13 L6 9 M1 7 L5 6" stroke="#888" stroke-width="1"/></svg>
<svg style="left:67.0px;top:533.0px" width="14" height="14" viewBox="0 0 14 14"><circle cx="6" cy="6" r="5.3" fill="none" stroke="#d8d8d8" stroke-width="1.2"/><circle cx="9" cy="9" r="4" fill="none" stroke="#888" stroke-width="1"/></svg>
<svg style="left:96.5px;top:533.0px" width="14" height="14" viewBox="0 0 14 14"><circle cx="6" cy="6" r="5" fill="#c8d8e0"/><path d="M13 8 A5 5 0 0 1 8 13" stroke="#8aa8c0" stroke-width="1.2" fill="none"/></svg>
<svg style="left:126.0px;top:533.0px" width="14" height="14" viewBox="0 0 14 14"><path d="M6 2 C8 5 10 7 10 9.5 A4 4 0 0 1 2 9.5 C2 7 4 5 6 2Z" fill="#a8d0e8"/><path d="M11 0 V5 M8.5 2.5 H13.5" stroke="#4aa8f0" stroke-width="1.2"/></svg>
<svg style="left:7.5px;top:554.5px" width="15" height="15" viewBox="0 0 15 15"><path d="M1 9 L6 4 L10 8 L5 13Z" fill="#8a4a20"/><path d="M6 4 L13 0.5 L14.5 2 L10 8Z" fill="#e03838"/><path d="M0 11 L3 14" stroke="#d08040" stroke-width="2"/></svg>
<svg style="left:37.5px;top:555.0px" width="14" height="14" viewBox="0 0 14 14"><path d="M6 2 C8 5 10 7 10 9.5 A4 4 0 0 1 2 9.5 C2 7 4 5 6 2Z" fill="#a8d0e8"/><path d="M8.5 2.5 H13.5" stroke="#4aa8f0" stroke-width="1.2"/></svg>
<svg style="left:67.0px;top:555.0px" width="14" height="14" viewBox="0 0 14 14"><circle cx="7" cy="7" r="4.5" fill="none" stroke="#1a88f0" stroke-width="3"/><g stroke="#1a88f0" stroke-width="2.2"><path d="M7 0.5 V2.5 M7 11.5 V13.5 M0.5 7 H2.5 M11.5 7 H13.5 M2.4 2.4 L3.8 3.8 M10.2 10.2 L11.6 11.6 M2.4 11.6 L3.8 10.2 M10.2 3.8 L11.6 2.4"/></g></svg>
<svg style="left:96.5px;top:555.0px" width="14" height="14" viewBox="0 0 14 14"><circle cx="7" cy="7" r="6.5" fill="#e8e8e8"/><rect x="6.2" y="0" width="1.6" height="14" fill="#20a080"/><path d="M3 1.5 A6 6 0 0 0 3 12.5" stroke="#555" stroke-width="1" fill="none"/></svg>
<svg style="left:126.0px;top:555.0px" width="14" height="14" viewBox="0 0 14 14"><path d="M7 1 L13.5 13 H0.5Z" fill="none" stroke="#c8c8c8" stroke-width="1"/><g fill="#aaa"><circle cx="7" cy="6" r="0.6"/><circle cx="5" cy="9" r="0.6"/><circle cx="9" cy="9" r="0.6"/><circle cx="4" cy="11.5" r="0.6"/><circle cx="7" cy="11.5" r="0.6"/><circle cx="10" cy="11.5" r="0.6"/></g></svg>
<svg style="left:8.0px;top:577.0px" width="14" height="14" viewBox="0 0 14 14"><circle cx="7" cy="7" r="6.5" fill="#d8d8d8"/><path d="M2 10 H4 C5.5 10 5.5 3 7 3 C8.5 3 8.5 10 10 10 H12" stroke="#333" stroke-width="1" fill="none"/></svg>
<svg style="left:8.0px;top:611.0px" width="14" height="14" viewBox="0 0 14 14"><circle cx="7" cy="7" r="6" fill="#f08a20"/><path d="M7 7 L14 3 L14 9Z" fill="#313131"/><path d="M2 5 L6 6 M3 10 L6 8" stroke="#c04a10" stroke-width="0.8"/></svg>
<svg style="left:37.5px;top:611.0px" width="14" height="14" viewBox="0 0 14 14"><path d="M7 7 C8 6 9 7.5 8 8.5 C6.5 9.5 5 8 5.5 6.5 C6.5 4.5 9.5 4.5 10.5 7 C11.5 10 8.5 12 6 11.5 C3 11 2 8 3 5.5 C4 3 7 2 9.5 2.5 M3 12 Q5 14 8 13" stroke="#c8c8c8" stroke-width="1" fill="none"/></svg>
<svg style="left:67.0px;top:611.0px" width="14" height="14" viewBox="0 0 14 14"><defs><linearGradient id="g3" x1="0" y1="0" x2="0" y2="1"><stop offset="0" stop-color="#e8f4ff"/><stop offset="1" stop-color="#70b0e8"/></linearGradient></defs><path d="M2 1 H12 Q9 7 12 13 H2 Q5 7 2 1Z" fill="url(#g3)"/><circle cx="1" cy="7" r="1" fill="#3a9af0"/><circle cx="13" cy="7" r="1" fill="#3a9af0"/></svg>
<svg style="left:96.5px;top:611.0px" width="14" height="14" viewBox="0 0 14 14"><defs><radialGradient id="g4" cx="0.4" cy="0.35" r="0.7"><stop offset="0" stop-color="#a8c0f0"/><stop offset="1" stop-color="#3050b0"/></radialGradient></defs><circle cx="7" cy="7" r="6.5" fill="url(#g4)"/><path d="M1 5 H13 M1 9 H13 M4 1 V13 M7 0.5 V13.5 M10 1 V13" stroke="#c8d8f0" stroke-width="0.5"/></svg>
<svg style="left:126.0px;top:611.0px" width="14" height="14" viewBox="0 0 14 14"><circle cx="7" cy="7" r="6.5" fill="none" stroke="#7a8a90" stroke-width="1"/><circle cx="7" cy="7" r="4.5" fill="none" stroke="#50b0a0" stroke-width="0.9"/><circle cx="7" cy="7" r="2.5" fill="none" stroke="#7a70b0" stroke-width="0.9"/></svg>
<svg style="left:8.0px;top:633.0px" width="14" height="14" viewBox="0 0 14 14"><path d="M1 1 Q7 4 13 1 Q10 7 13 13 Q7 10 1 13 Q4 7 1 1Z" fill="none" stroke="#50c0b0" stroke-width="1.2"/><path d="M3 5 H11 M3 9 H11 M5 3 V11 M9 3 V11" stroke="#50c0b0" stroke-width="0.8"/></svg>
<svg style="left:37.5px;top:633.0px" width="14" height="14" viewBox="0 0 14 14"><path d="M1 1 Q7 4 13 1 Q10 7 13 13 Q7 10 1 13 Q4 7 1 1Z" fill="none" stroke="#50c0b0" stroke-width="1.2"/><path d="M9 4.5 A3 3 0 1 0 9 9.5" stroke="#60d8c8" stroke-width="1.4" fill="none"/></svg>
<svg style="left:67.0px;top:633.0px" width="14" height="14" viewBox="0 0 14 14"><path d="M1 3 Q4 1 7 3 Q10 5 13 3 M1 7 Q4 5 7 7 Q10 9 13 7 M1 11 Q4 9 7 11 Q10 13 13 11 M1 1 V13 M13 1 V13" stroke="#50c0b0" stroke-width="1.1" fill="none"/></svg>
<svg style="left:96.5px;top:633.0px" width="14" height="14" viewBox="0 0 14 14"><path d="M1 5 Q7 1 13 1 V11 Q7 11 1 14Z" fill="#d8ecf8"/><circle cx="2" cy="1.5" r="1" fill="#3a9af0"/><circle cx="11" cy="13" r="1" fill="#3a9af0"/></svg>
<svg style="left:126.0px;top:633.0px" width="14" height="14" viewBox="0 0 14 14"><circle cx="3.5" cy="3.5" r="2.5" fill="#40b090"/><circle cx="10.5" cy="3.5" r="2.5" fill="#888"/><circle cx="3.5" cy="10.5" r="2.5" fill="#888"/><circle cx="10.5" cy="10.5" r="2.5" fill="#888"/><path d="M7 0 V14 M0 7 H14" stroke="#50b0c8" stroke-width="1.5"/></svg>
<svg style="left:8.0px;top:667.5px" width="14" height="14" viewBox="0 0 14 14"><circle cx="7" cy="7" r="6" fill="#888" /><g fill="#ccc"><circle cx="5" cy="5" r="1.2"/><circle cx="9" cy="4" r="1"/><circle cx="4" cy="9" r="1"/><circle cx="9" cy="9" r="1.3"/></g><path d="M1 1 L13 13 M13 1 L1 13" stroke="#d02040" stroke-width="1.3"/></svg>
<svg style="left:37.5px;top:667.5px" width="14" height="14" viewBox="0 0 14 14"><circle cx="7" cy="7" r="6.2" fill="#999"/><g fill="#ddd"><circle cx="5" cy="5" r="1.2"/><circle cx="9" cy="4" r="1"/><circle cx="4" cy="9" r="1"/><circle cx="9" cy="9" r="1.3"/><circle cx="7" cy="11" r="1"/></g></svg>
<svg style="left:67.0px;top:667.5px" width="14" height="14" viewBox="0 0 14 14"><defs><linearGradient id="g5" x1="0" y1="0" x2="0" y2="1"><stop offset="0" stop-color="#60c0f0"/><stop offset="0.5" stop-color="#80d8b0"/><stop offset="1" stop-color="#e0e860"/></linearGradient></defs><circle cx="7" cy="7" r="6.5" fill="url(#g5)"/></svg>
<svg style="left:96.5px;top:667.5px" width="14" height="14" viewBox="0 0 14 14"><circle cx="7" cy="7" r="6.5" fill="#50a8a0"/><circle cx="7" cy="7" r="5" fill="#7880c8" opacity="0.8"/><circle cx="7" cy="7" r="2.6" fill="#222"/></svg>
<svg style="left:126.0px;top:667.5px" width="14" height="14" viewBox="0 0 14 14"><rect x="1" y="1" width="12" height="12" fill="#e8e8e8"/><path d="M0 0 L3 1 L1 3Z" fill="#c040e0"/><path d="M14 14 L11 13 L13 11Z" fill="#40e040"/><path d="M0 1 V13 M13 0 V14" stroke="#b070e0" stroke-width="1"/><path d="M13 6 V14" stroke="#40d040" stroke-width="1.5"/></svg>
<svg style="left:8.0px;top:689.5px" width="14" height="14" viewBox="0 0 14 14"><rect x="0.5" y="0.5" width="13" height="13" fill="#6040c0" stroke="#c060f0"/><rect x="3" y="3" width="8" height="8" fill="#8a70e8" stroke="#50a8f0" stroke-width="0.8"/><rect x="5.5" y="5.5" width="3" height="3" fill="none" stroke="#ddd" stroke-width="0.6"/></svg>
<svg style="left:37.5px;top:689.5px" width="14" height="14" viewBox="0 0 14 14"><rect x="1" y="1" width="12" height="12" rx="3" fill="#f0f4f8" stroke="#a8c8e8" stroke-width="1"/></svg>
<svg style="left:67.0px;top:689.5px" width="14" height="14" viewBox="0 0 14 14"><circle cx="7" cy="7" r="6" fill="#777" /><g fill="#ccc"><circle cx="5" cy="5" r="1.2"/><circle cx="9" cy="9" r="1.3"/></g><path d="M1 1 L13 13 M13 1 L1 13" stroke="#d02040" stroke-width="1.3"/></svg>
<svg style="left:96.5px;top:689.5px" width="14" height="14" viewBox="0 0 14 14"><circle cx="7" cy="7" r="6.5" fill="#d8d8d8"/><path d="M2 9 L5 4 L9 10 L12 5" stroke="#333" stroke-width="1" fill="none"/><path d="M6 10 L9 4" stroke="#e03040" stroke-width="1"/></svg>
<svg style="left:126.0px;top:689.5px" width="14" height="14" viewBox="0 0 14 14"><circle cx="7" cy="7" r="6.5" fill="#2a78c8"/><path d="M0.5 8 L4 5 L7 8 L10 5 L13.5 8 V9 H0.5Z" fill="#e8f0f8"/><path d="M0.5 9 H13.5 A6.5 6.5 0 0 1 0.5 9Z" fill="#102850"/><circle cx="10.5" cy="3.5" r="1.2" fill="#f0d040"/></svg>
<svg style="left:8.0px;top:711.0px" width="14" height="14" viewBox="0 0 14 14"><defs><linearGradient id="g6" x1="0" y1="0" x2="0" y2="1"><stop offset="0" stop-color="#222"/><stop offset="0.45" stop-color="#222"/><stop offset="0.5" stop-color="#fff8d0"/><stop offset="1" stop-color="#313131"/></linearGradient></defs><path d="M0 5 Q7 -1 14 5Z" fill="#111"/><rect x="0" y="5" width="14" height="9" fill="url(#g6)"/></svg>
<svg style="left:37.5px;top:711.0px" width="14" height="14" viewBox="0 0 14 14"><rect x="0.5" y="0.5" width="8" height="8" fill="#e8f0f8" stroke="#a8c0d8" stroke-width="0.6"/><path d="M5 4 L13 2 V12 L5 14Z" fill="#c8e0f8" stroke="#7aa8d8" stroke-width="0.6"/></svg>
<svg style="left:67.0px;top:711.0px" width="14" height="14" viewBox="0 0 14 14"><path d="M7 2 A5 5 0 0 0 7 12Z" fill="#f0a020"/><path d="M7 2 A5 5 0 0 1 7 12Z" fill="#2a2a2a"/><path d="M3 1 L4 3 M1 5 L3 6 M1 9 L3 8 M3 13 L4 11" stroke="#f0a020" stroke-width="0.9"/></svg>
<svg style="left:96.5px;top:711.0px" width="14" height="14" viewBox="0 0 14 14"><defs><linearGradient id="g7" x1="0" y1="0" x2="0" y2="1"><stop offset="0" stop-color="#e0d8f8"/><stop offset="0.3" stop-color="#6070e0"/><stop offset="1" stop-color="#1020a0"/></linearGradient></defs><rect x="0" y="0" width="14" height="14" fill="url(#g7)"/></svg>
<svg style="left:127.0px;top:711.5px" width="12" height="13" viewBox="0 0 12 13"><rect x="0" y="0.5" width="3.4" height="3.4" fill="#10a0f0"/><rect x="0" y="4.8" width="3.4" height="3.4" fill="#10a0f0"/><rect x="0" y="9.1" width="3.4" height="3.4" fill="#10a0f0"/><rect x="4.3" y="0.5" width="3.4" height="3.4" fill="#10a0f0"/><rect x="4.3" y="4.8" width="3.4" height="3.4" fill="#10a0f0"/><rect x="4.3" y="9.1" width="3.4" height="3.4" fill="#10a0f0"/><rect x="8.6" y="0.5" width="3.4" height="3.4" fill="#10a0f0"/><rect x="8.6" y="4.8" width="3.4" height="3.4" fill="#10a0f0"/><rect x="8.6" y="9.1" width="3.4" height="3.4" fill="#10a0f0"/></svg>
<svg style="left:7.5px;top:745.0px" width="15" height="15" viewBox="0 0 15 15"><path d="M1 14 L3 9 L9 3 L11 5 L5 11Z" fill="#bbb"/><path d="M1 14 L3 9" stroke="#333" stroke-width="1"/><path d="M9 3 L12 0.5 Q14.5 0 14 3 L11 5Z" fill="#d89020"/></svg>
<svg style="left:37.0px;top:744.5px" width="15" height="16" viewBox="0 0 15 16"><path d="M4 15 C2 12 0 9 1 7 L3 8 V3 A1 1 0 0 1 5 3 V7 V1.5 A1 1 0 0 1 7 1.5 V7 V2 A1 1 0 0 1 9 2 V7 V3.5 A1 1 0 0 1 11 3.5 V9 L13 6.5 A1 1 0 0 1 14.5 8 L11 14 Z" fill="#f0c8a0" stroke="#b88860" stroke-width="0.6"/></svg>
<svg style="left:66.5px;top:745.0px" width="15" height="15" viewBox="0 0 15 15"><circle cx="6" cy="6" r="4.8" fill="#c8e4f8" stroke="#50a0e0" stroke-width="1.3"/><path d="M9.5 9.5 L14 14" stroke="#d08040" stroke-width="2"/></svg>
<svg style="left:57px;top:773px;overflow:hidden" width="34" height="20" viewBox="0 0 34 20"><circle cx="12" cy="12.5" r="10" fill="#000" stroke="#4a4a4a" stroke-width="1"/><circle cx="22" cy="22.5" r="9.8" fill="#fff" stroke="#333" stroke-width="1.2"/><path d="M23.5 5 Q27.5 3 29.5 8 M28 7.3 L29.5 8.3 L30.5 6.5 M24.8 3.5 L23.5 5 L25 6.2" stroke="#ccc" stroke-width="0.9" fill="none"/></svg>
<div class="a" style="left:1206px;top:84px;width:294px;height:709px;background:#333333;"></div>
<div class="a" style="left:1206px;top:84px;width:294px;height:17px;background:#282828;"></div>
<div class="a" style="left:1301px;top:84.5px;width:43px;height:16.5px;background:#3c3c3c;"></div>
<div class="a" style="left:1212px;top:90px;width:1px;height:5px;background:#666;"></div>
<div class="a" style="left:1214.5px;top:90px;width:1px;height:5px;background:#666;"></div>
<div class="t" style="left:1224.4px;top:88.68px;font-size:9px;line-height:9px;color:#d8d8d8;letter-spacing:-0.25px">Histogram</div>
<div class="t" style="left:1271.6px;top:88.68px;font-size:9px;line-height:9px;color:#d8d8d8;letter-spacing:-0.25px">Colour</div>
<div class="t" style="left:1304.7px;top:88.68px;font-size:9px;line-height:9px;color:#f0f0f0;letter-spacing:-0.25px">Swatches</div>
<div class="t" style="left:1348px;top:88.68px;font-size:9px;line-height:9px;color:#d8d8d8;letter-spacing:-0.25px">Brushes</div>
<div class="a" style="left:1487px;top:89px;width:7px;height:6px;background:#999;border-radius:1px"></div>
<div class="a" style="left:1487px;top:91px;width:7px;height:1px;background:#555;"></div>
<div class="a" style="left:1495px;top:94px;width:1.5px;height:1.5px;background:#bbb;"></div>
<div class="a" style="left:1206px;top:101px;width:294px;height:47.5px;background:#3c3c3c;"></div>
<svg style="left:1215px;top:112px" width="36" height="35" viewBox="0 0 36 35"><circle cx="13" cy="12.6" r="9.6" fill="#000" stroke="#555" stroke-width="0.8"/><circle cx="22.5" cy="22.3" r="9.6" fill="#fff" stroke="#3a3a3a" stroke-width="1"/><circle cx="8.4" cy="27.2" r="3.8" fill="#fff" stroke="#444" stroke-width="0.6"/><path d="M5.8 29.8 L11 24.6" stroke="#e03030" stroke-width="1.2"/><path d="M24 4.5 Q29 3.5 31 9.5 M29.5 8.8 L31 9.8 L32 8 M25.5 3 L24 4.5 L25.5 6" stroke="#ccc" stroke-width="0.9" fill="none"/></svg>
<svg style="left:1255.5px;top:114px" width="14" height="13" viewBox="0 0 14 13"><path d="M0.5 12.5 L2 9 L8 3 L10 5 L4 11Z" fill="#9a9a9a"/><path d="M8 3 L11 0.8 Q13.5 0 13 2.5 L10 5Z" fill="#d89a30"/><path d="M7.2 3.8 L9.2 5.8" stroke="#c08020" stroke-width="1.2"/></svg>
<div class="a" style="left:1271.3px;top:114.9px;width:10.6px;height:10.6px;background:#e8170e;border-radius:50%"></div>
<div class="t" style="left:1410.7px;top:123.38px;font-size:9px;line-height:9px;color:#e0e0e0;letter-spacing:-0.2px">Opacity:</div>
<div class="a" style="left:1445.4px;top:120px;width:46.6px;height:14.7px;background:#2f2f2f;border-radius:2px"></div>
<div class="t" style="left:1450.3px;top:123.38px;font-size:9px;line-height:9px;color:#e0e0e0;letter-spacing:-0.2px">100 %</div>
<svg style="left:1483px;top:125.5px" width="6" height="4" viewBox="0 0 6 4"><path d="M0.5 0.5 H5.5 L3 3.5Z" fill="#eee"/></svg>
<div class="t" style="left:1214px;top:155.68px;font-size:9px;line-height:9px;color:#e0e0e0;letter-spacing:-0.2px">Recent:</div>
<div class="a" style="left:1247.6px;top:154.7px;width:114.2px;height:12.6px;background:#3b3b3b;"></div>
<div class="a" style="left:1214.5px;top:171px;width:197.6px;height:17.7px;background:#393939;border:1px solid #2b2b2b;border-radius:2px"></div>
<svg style="left:1218px;top:174.5px" width="12" height="11" viewBox="0 0 12 11"><path d="M6 1.5 L10.8 9.8 H1.2Z" fill="none" stroke="#0a0a0a" stroke-width="2.2" stroke-linejoin="round"/></svg>
<div class="t" style="left:1233.7px;top:175.38px;font-size:9px;line-height:9px;color:#e8e8e8;letter-spacing:-0.2px">Colours</div>
<svg style="left:1403px;top:178px" width="6" height="4" viewBox="0 0 6 4"><path d="M0.5 0.5 H5.5 L3 3.5Z" fill="#eee"/></svg>
<svg style="left:1415px;top:173.5px" width="12" height="12" viewBox="0 0 12 12"><rect x="0.5" y="0.5" width="4" height="4" fill="none" stroke="#aaa" stroke-width="0.8"/><rect x="6.5" y="0.5" width="4" height="4" fill="none" stroke="#aaa" stroke-width="0.8"/><rect x="0.5" y="6.5" width="4" height="4" fill="none" stroke="#aaa" stroke-width="0.8"/><path d="M8.5 6 V11 M6 8.5 H11" stroke="#ccc" stroke-width="1.3"/></svg>
<div class="a" style="left:1443.5px;top:172.7px;width:45.3px;height:13px;background:#1a1a1a;"></div>
<div class="a" style="left:1444.3px;top:173.5px;width:10.5px;height:11.5px;background:#fff;"></div>
<svg style="left:1444.3px;top:173.5px" width="11" height="12" viewBox="0 0 11 12"><path d="M0.5 11.5 L10.5 0.5" stroke="#e02020" stroke-width="1.3"/></svg>
<div class="a" style="left:1455.3px;top:173.5px;width:10.8px;height:11.5px;background:#000;"></div>
<div class="a" style="left:1466.6px;top:173.5px;width:10.5px;height:11.5px;background:#808080;"></div>
<div class="a" style="left:1477.5px;top:173.5px;width:10.5px;height:11.5px;background:#fff;border-radius:0 1px 1px 0"></div>
<svg style="left:1214.2px;top:195.4px" width="276" height="78" viewBox="0 0 276 78"><rect x="0" y="0" width="275.25" height="66.82" fill="#141414"/><rect x="0" y="65.82" width="33.91" height="11.97" fill="#141414"/><rect x="1.00" y="1.00" width="9.97" height="9.97" fill="#e82018"/><rect x="11.97" y="1.00" width="9.97" height="9.97" fill="#e85a10"/><rect x="22.94" y="1.00" width="9.97" height="9.97" fill="#eaa800"/><rect x="33.91" y="1.00" width="9.97" height="9.97" fill="#e8f000"/><rect x="44.88" y="1.00" width="9.97" height="9.97" fill="#98f000"/><rect x="55.85" y="1.00" width="9.97" height="9.97" fill="#58f000"/><rect x="66.82" y="1.00" width="9.97" height="9.97" fill="#40f000"/><rect x="77.79" y="1.00" width="9.97" height="9.97" fill="#48f070"/><rect x="88.76" y="1.00" width="9.97" height="9.97" fill="#50f0c0"/><rect x="99.73" y="1.00" width="9.97" height="9.97" fill="#48c0f0"/><rect x="110.70" y="1.00" width="9.97" height="9.97" fill="#4070f0"/><rect x="121.67" y="1.00" width="9.97" height="9.97" fill="#3000f0"/><rect x="132.64" y="1.00" width="9.97" height="9.97" fill="#4000f0"/><rect x="143.61" y="1.00" width="9.97" height="9.97" fill="#9000f0"/><rect x="154.58" y="1.00" width="9.97" height="9.97" fill="#e000f0"/><rect x="165.55" y="1.00" width="9.97" height="9.97" fill="#e800b0"/><rect x="176.52" y="1.00" width="9.97" height="9.97" fill="#e81860"/><rect x="187.49" y="1.00" width="9.97" height="9.97" fill="#d82020"/><rect x="198.46" y="1.00" width="9.97" height="9.97" fill="#e06018"/><rect x="209.43" y="1.00" width="9.97" height="9.97" fill="#e0a010"/><rect x="220.40" y="1.00" width="9.97" height="9.97" fill="#d8e000"/><rect x="231.37" y="1.00" width="9.97" height="9.97" fill="#90e800"/><rect x="242.34" y="1.00" width="9.97" height="9.97" fill="#48e800"/><rect x="253.31" y="1.00" width="9.97" height="9.97" fill="#40e830"/><rect x="264.28" y="1.00" width="9.97" height="9.97" fill="#48e870"/><rect x="1.00" y="11.97" width="9.97" height="9.97" fill="#50e0c0"/><rect x="11.97" y="11.97" width="9.97" height="9.97" fill="#48b8e8"/><rect x="22.94" y="11.97" width="9.97" height="9.97" fill="#4070e8"/><rect x="33.91" y="11.97" width="9.97" height="9.97" fill="#3010e0"/><rect x="44.88" y="11.97" width="9.97" height="9.97" fill="#5000e8"/><rect x="55.85" y="11.97" width="9.97" height="9.97" fill="#9000e8"/><rect x="66.82" y="11.97" width="9.97" height="9.97" fill="#d800e8"/><rect x="77.79" y="11.97" width="9.97" height="9.97" fill="#d810b0"/><rect x="88.76" y="11.97" width="9.97" height="9.97" fill="#d82060"/><rect x="99.73" y="11.97" width="9.97" height="9.97" fill="#c82828"/><rect x="110.70" y="11.97" width="9.97" height="9.97" fill="#d06020"/><rect x="121.67" y="11.97" width="9.97" height="9.97" fill="#d0a020"/><rect x="132.64" y="11.97" width="9.97" height="9.97" fill="#d0d800"/><rect x="143.61" y="11.97" width="9.97" height="9.97" fill="#90d818"/><rect x="154.58" y="11.97" width="9.97" height="9.97" fill="#50d818"/><rect x="165.55" y="11.97" width="9.97" height="9.97" fill="#40d830"/><rect x="176.52" y="11.97" width="9.97" height="9.97" fill="#48d878"/><rect x="187.49" y="11.97" width="9.97" height="9.97" fill="#50d8b0"/><rect x="198.46" y="11.97" width="9.97" height="9.97" fill="#48b0d8"/><rect x="209.43" y="11.97" width="9.97" height="9.97" fill="#4070d8"/><rect x="220.40" y="11.97" width="9.97" height="9.97" fill="#3828d8"/><rect x="231.37" y="11.97" width="9.97" height="9.97" fill="#5000d8"/><rect x="242.34" y="11.97" width="9.97" height="9.97" fill="#9810d8"/><rect x="253.31" y="11.97" width="9.97" height="9.97" fill="#d000e0"/><rect x="264.28" y="11.97" width="9.97" height="9.97" fill="#d020a8"/><rect x="1.00" y="22.94" width="9.97" height="9.97" fill="#d02868"/><rect x="11.97" y="22.94" width="9.97" height="9.97" fill="#c03030"/><rect x="22.94" y="22.94" width="9.97" height="9.97" fill="#c06830"/><rect x="33.91" y="22.94" width="9.97" height="9.97" fill="#c8a030"/><rect x="44.88" y="22.94" width="9.97" height="9.97" fill="#c0c830"/><rect x="55.85" y="22.94" width="9.97" height="9.97" fill="#90c830"/><rect x="66.82" y="22.94" width="9.97" height="9.97" fill="#60c830"/><rect x="77.79" y="22.94" width="9.97" height="9.97" fill="#48c840"/><rect x="88.76" y="22.94" width="9.97" height="9.97" fill="#50c878"/><rect x="99.73" y="22.94" width="9.97" height="9.97" fill="#50c8a8"/><rect x="110.70" y="22.94" width="9.97" height="9.97" fill="#48a8c8"/><rect x="121.67" y="22.94" width="9.97" height="9.97" fill="#4878c8"/><rect x="132.64" y="22.94" width="9.97" height="9.97" fill="#3838c8"/><rect x="143.61" y="22.94" width="9.97" height="9.97" fill="#5828c8"/><rect x="154.58" y="22.94" width="9.97" height="9.97" fill="#8828c8"/><rect x="165.55" y="22.94" width="9.97" height="9.97" fill="#b828c8"/><rect x="176.52" y="22.94" width="9.97" height="9.97" fill="#c030a0"/><rect x="187.49" y="22.94" width="9.97" height="9.97" fill="#b83068"/><rect x="198.46" y="22.94" width="9.97" height="9.97" fill="#b03838"/><rect x="209.43" y="22.94" width="9.97" height="9.97" fill="#b06838"/><rect x="220.40" y="22.94" width="9.97" height="9.97" fill="#b89838"/><rect x="231.37" y="22.94" width="9.97" height="9.97" fill="#b8b838"/><rect x="242.34" y="22.94" width="9.97" height="9.97" fill="#90b840"/><rect x="253.31" y="22.94" width="9.97" height="9.97" fill="#68b840"/><rect x="264.28" y="22.94" width="9.97" height="9.97" fill="#48b848"/><rect x="1.00" y="33.91" width="9.97" height="9.97" fill="#50b870"/><rect x="11.97" y="33.91" width="9.97" height="9.97" fill="#50b8a0"/><rect x="22.94" y="33.91" width="9.97" height="9.97" fill="#50a0b8"/><rect x="33.91" y="33.91" width="9.97" height="9.97" fill="#4878b8"/><rect x="44.88" y="33.91" width="9.97" height="9.97" fill="#4840b8"/><rect x="55.85" y="33.91" width="9.97" height="9.97" fill="#6038b8"/><rect x="66.82" y="33.91" width="9.97" height="9.97" fill="#8838b8"/><rect x="77.79" y="33.91" width="9.97" height="9.97" fill="#a838b8"/><rect x="88.76" y="33.91" width="9.97" height="9.97" fill="#b040a0"/><rect x="99.73" y="33.91" width="9.97" height="9.97" fill="#b04070"/><rect x="110.70" y="33.91" width="9.97" height="9.97" fill="#a84848"/><rect x="121.67" y="33.91" width="9.97" height="9.97" fill="#a87048"/><rect x="132.64" y="33.91" width="9.97" height="9.97" fill="#a89048"/><rect x="143.61" y="33.91" width="9.97" height="9.97" fill="#a8a848"/><rect x="154.58" y="33.91" width="9.97" height="9.97" fill="#90a848"/><rect x="165.55" y="33.91" width="9.97" height="9.97" fill="#68a848"/><rect x="176.52" y="33.91" width="9.97" height="9.97" fill="#50a850"/><rect x="187.49" y="33.91" width="9.97" height="9.97" fill="#58a870"/><rect x="198.46" y="33.91" width="9.97" height="9.97" fill="#58a898"/><rect x="209.43" y="33.91" width="9.97" height="9.97" fill="#5898a8"/><rect x="220.40" y="33.91" width="9.97" height="9.97" fill="#5878a8"/><rect x="231.37" y="33.91" width="9.97" height="9.97" fill="#5050a8"/><rect x="242.34" y="33.91" width="9.97" height="9.97" fill="#6848a8"/><rect x="253.31" y="33.91" width="9.97" height="9.97" fill="#8848a8"/><rect x="264.28" y="33.91" width="9.97" height="9.97" fill="#a048a8"/><rect x="1.00" y="44.88" width="9.97" height="9.97" fill="#a848a0"/><rect x="11.97" y="44.88" width="9.97" height="9.97" fill="#a84878"/><rect x="22.94" y="44.88" width="9.97" height="9.97" fill="#985050"/><rect x="33.91" y="44.88" width="9.97" height="9.97" fill="#a07050"/><rect x="44.88" y="44.88" width="9.97" height="9.97" fill="#a08850"/><rect x="55.85" y="44.88" width="9.97" height="9.97" fill="#a0a050"/><rect x="66.82" y="44.88" width="9.97" height="9.97" fill="#88a050"/><rect x="77.79" y="44.88" width="9.97" height="9.97" fill="#68a050"/><rect x="88.76" y="44.88" width="9.97" height="9.97" fill="#58a058"/><rect x="99.73" y="44.88" width="9.97" height="9.97" fill="#58a070"/><rect x="110.70" y="44.88" width="9.97" height="9.97" fill="#5a9888"/><rect x="121.67" y="44.88" width="9.97" height="9.97" fill="#5890a0"/><rect x="132.64" y="44.88" width="9.97" height="9.97" fill="#5878a0"/><rect x="143.61" y="44.88" width="9.97" height="9.97" fill="#5860a0"/><rect x="154.58" y="44.88" width="9.97" height="9.97" fill="#6850a0"/><rect x="165.55" y="44.88" width="9.97" height="9.97" fill="#8050a0"/><rect x="176.52" y="44.88" width="9.97" height="9.97" fill="#9858a0"/><rect x="187.49" y="44.88" width="9.97" height="9.97" fill="#985888"/><rect x="198.46" y="44.88" width="9.97" height="9.97" fill="#985868"/><rect x="209.43" y="44.88" width="9.97" height="9.97" fill="#906060"/><rect x="220.40" y="44.88" width="9.97" height="9.97" fill="#907060"/><rect x="231.37" y="44.88" width="9.97" height="9.97" fill="#908860"/><rect x="242.34" y="44.88" width="9.97" height="9.97" fill="#909860"/><rect x="253.31" y="44.88" width="9.97" height="9.97" fill="#809860"/><rect x="264.28" y="44.88" width="9.97" height="9.97" fill="#689860"/><rect x="1.00" y="55.85" width="9.97" height="9.97" fill="#689868"/><rect x="11.97" y="55.85" width="9.97" height="9.97" fill="#689880"/><rect x="22.94" y="55.85" width="9.97" height="9.97" fill="#689888"/><rect x="33.91" y="55.85" width="9.97" height="9.97" fill="#688c98"/><rect x="44.88" y="55.85" width="9.97" height="9.97" fill="#687898"/><rect x="55.85" y="55.85" width="9.97" height="9.97" fill="#686898"/><rect x="66.82" y="55.85" width="9.97" height="9.97" fill="#706098"/><rect x="77.79" y="55.85" width="9.97" height="9.97" fill="#806098"/><rect x="88.76" y="55.85" width="9.97" height="9.97" fill="#906098"/><rect x="99.73" y="55.85" width="9.97" height="9.97" fill="#906080"/><rect x="110.70" y="55.85" width="9.97" height="9.97" fill="#906070"/><rect x="121.67" y="55.85" width="9.97" height="9.97" fill="#887070"/><rect x="132.64" y="55.85" width="9.97" height="9.97" fill="#887870"/><rect x="143.61" y="55.85" width="9.97" height="9.97" fill="#888070"/><rect x="154.58" y="55.85" width="9.97" height="9.97" fill="#888870"/><rect x="165.55" y="55.85" width="9.97" height="9.97" fill="#808870"/><rect x="176.52" y="55.85" width="9.97" height="9.97" fill="#788870"/><rect x="187.49" y="55.85" width="9.97" height="9.97" fill="#708870"/><rect x="198.46" y="55.85" width="9.97" height="9.97" fill="#708878"/><rect x="209.43" y="55.85" width="9.97" height="9.97" fill="#708880"/><rect x="220.40" y="55.85" width="9.97" height="9.97" fill="#708088"/><rect x="231.37" y="55.85" width="9.97" height="9.97" fill="#707888"/><rect x="242.34" y="55.85" width="9.97" height="9.97" fill="#707088"/><rect x="253.31" y="55.85" width="9.97" height="9.97" fill="#787088"/><rect x="264.28" y="55.85" width="9.97" height="9.97" fill="#7a6a88"/><rect x="1.00" y="66.82" width="9.97" height="9.97" fill="#887088"/><rect x="11.97" y="66.82" width="9.97" height="9.97" fill="#8a7088"/><rect x="22.94" y="66.82" width="9.97" height="9.97" fill="#8a7078"/><rect x="1.5" y="1.5" width="8.97" height="8.97" fill="none" stroke="#8a5a5a" stroke-width="0.8"/></svg>
<div class="a" style="left:1215px;top:296px;width:276px;height:14.5px;background:#3c3c3c;"></div>
<svg style="left:1218.5px;top:298px" width="11" height="11" viewBox="0 0 11 11"><circle cx="4.3" cy="4.3" r="3.5" fill="none" stroke="#ccc" stroke-width="1.1"/><path d="M6.8 6.8 L10 10" stroke="#ccc" stroke-width="1.2"/></svg>
<div class="t" style="left:1231.4px;top:299.88px;font-size:9px;line-height:9px;color:#8a8a8a;letter-spacing:-0.2px">Search</div>
<div class="a" style="left:1206px;top:317px;width:294px;height:18px;background:#282828;"></div>
<div class="a" style="left:1220.5px;top:318.3px;width:31.5px;height:16.7px;background:#3c3c3c;"></div>
<div class="a" style="left:1211.5px;top:323px;width:1px;height:5.5px;background:#666;"></div>
<div class="a" style="left:1214px;top:323px;width:1px;height:5.5px;background:#666;"></div>
<div class="t" style="left:1224.4px;top:322.08px;font-size:9px;line-height:9px;color:#f0f0f0;letter-spacing:-0.25px">Layers</div>
<div class="t" style="left:1255.7px;top:322.08px;font-size:9px;line-height:9px;color:#d8d8d8;letter-spacing:-0.25px">Effects</div>
<div class="t" style="left:1288px;top:322.08px;font-size:9px;line-height:9px;color:#d8d8d8;letter-spacing:-0.25px">Styles</div>
<div class="a" style="left:1487px;top:322px;width:7px;height:6px;background:#999;border-radius:1px"></div>
<div class="a" style="left:1487px;top:324px;width:7px;height:1px;background:#555;"></div>
<div class="a" style="left:1495px;top:327px;width:1.5px;height:1.5px;background:#bbb;"></div>
<div class="a" style="left:1206px;top:335px;width:294px;height:21.6px;background:#3c3c3c;"></div>
<div class="t" style="left:1212.6px;top:343.68px;font-size:9px;line-height:9px;color:#505050;letter-spacing:-0.2px">Opacity:</div>
<div class="a" style="left:1244.4px;top:338.8px;width:57.6px;height:14.6px;background:#383838;border:1px solid #2c2c2c;border-radius:2px"></div>
<div class="t" style="left:1249px;top:342.88px;font-size:9px;line-height:9px;color:#8a8a8a;letter-spacing:-0.2px">100 %</div>
<svg style="left:1294px;top:344px" width="6" height="4" viewBox="0 0 6 4"><path d="M0.5 0.5 H5.5 L3 3.5Z" fill="#999"/></svg>
<div class="a" style="left:1306px;top:338.8px;width:156.5px;height:14.6px;background:#383838;border:1px solid #2c2c2c;border-radius:2px"></div>
<div class="t" style="left:1309.6px;top:343.18px;font-size:9px;line-height:9px;color:#7a7a7a;letter-spacing:-0.2px">Normal</div>
<svg style="left:1453px;top:344.5px" width="6" height="4" viewBox="0 0 6 4"><path d="M0.5 0.5 H5.5 L3 3.5Z" fill="#999"/></svg>
<svg style="left:1465.5px;top:341px" width="11" height="11" viewBox="0 0 11 11"><g fill="#d0d0d0"><circle cx="5.5" cy="5.5" r="3.6"/><path d="M4.5 0.3 H6.5 L6.7 2 L4.3 2Z M4.5 10.7 H6.5 L6.7 9 L4.3 9Z M0.3 4.5 V6.5 L2 6.7 V4.3Z M10.7 4.5 V6.5 L9 6.7 V4.3Z"/><path d="M1.4 2.8 L2.8 1.4 L4 2.6 L2.6 4Z M9.6 8.2 L8.2 9.6 L7 8.4 L8.4 7Z M8.2 1.4 L9.6 2.8 L8.4 4 L7 2.6Z M2.8 9.6 L1.4 8.2 L2.6 7 L4 8.4Z"/></g><circle cx="5.5" cy="5.5" r="1.5" fill="#3a3a3a"/></svg>
<svg style="left:1484px;top:340.5px" width="9" height="12" viewBox="0 0 9 12"><path d="M2 5.5 V3.5 A2.5 2.5 0 0 1 7 3.5 V5.5" fill="none" stroke="#d0d0d0" stroke-width="1.2"/><rect x="0.5" y="5.5" width="8" height="6" fill="#d0d0d0"/></svg>
<div class="a" style="left:1206px;top:676.7px;width:294px;height:17px;background:#3c3c3c;"></div>
<div class="a" style="left:1210px;top:677px;width:16.3px;height:15.5px;background:#262626;"></div>
<svg style="left:1365px;top:680px" width="12" height="10" viewBox="0 0 12 10"><rect x="0" y="0" width="12" height="10" fill="#c8c8c8"/><circle cx="6" cy="5" r="3.3" fill="#333"/></svg>
<svg style="left:1383px;top:679.5px" width="11" height="11" viewBox="0 0 11 11"><circle cx="5.5" cy="5.5" r="4.8" fill="#c8c8c8"/><path d="M5.5 0.7 A4.8 4.8 0 0 1 5.5 10.3Z" fill="#333" transform="rotate(25 5.5 5.5)"/></svg>
<div class="t" style="left:1400px;top:681.19px;font-size:11px;line-height:11px;color:#c8c8c8;font-family:'Liberation Serif'"><i>fx</i></div>
<svg style="left:1418px;top:680px" width="9" height="11" viewBox="0 0 9 11"><path d="M0.5 0.5 H8.5 L5 5.5 L8.5 10.5 H0.5 L4 5.5Z" fill="#c8c8c8"/></svg>
<svg style="left:1449px;top:680.5px" width="11" height="9" viewBox="0 0 11 9"><path d="M0 1 H4 L5 2 H11 V9 H0Z" fill="#c8c8c8"/></svg>
<svg style="left:1467px;top:679.5px" width="9" height="11" viewBox="0 0 9 11"><rect x="0" y="0" width="1.5" height="1.5" fill="#ddd"/><rect x="0" y="1.5" width="1.5" height="1.5" fill="#555"/><rect x="0" y="3" width="1.5" height="1.5" fill="#ddd"/><rect x="0" y="4.5" width="1.5" height="1.5" fill="#555"/><rect x="0" y="6" width="1.5" height="1.5" fill="#ddd"/><rect x="0" y="7.5" width="1.5" height="1.5" fill="#555"/><rect x="0" y="9" width="1.5" height="1.5" fill="#ddd"/><rect x="1.5" y="0" width="1.5" height="1.5" fill="#555"/><rect x="1.5" y="1.5" width="1.5" height="1.5" fill="#ddd"/><rect x="1.5" y="3" width="1.5" height="1.5" fill="#555"/><rect x="1.5" y="4.5" width="1.5" height="1.5" fill="#ddd"/><rect x="1.5" y="6" width="1.5" height="1.5" fill="#555"/><rect x="1.5" y="7.5" width="1.5" height="1.5" fill="#ddd"/><rect x="1.5" y="9" width="1.5" height="1.5" fill="#555"/><rect x="3" y="0" width="1.5" height="1.5" fill="#ddd"/><rect x="3" y="1.5" width="1.5" height="1.5" fill="#555"/><rect x="3" y="3" width="1.5" height="1.5" fill="#ddd"/><rect x="3" y="4.5" width="1.5" height="1.5" fill="#555"/><rect x="3" y="6" width="1.5" height="1.5" fill="#ddd"/><rect x="3" y="7.5" width="1.5" height="1.5" fill="#555"/><rect x="3" y="9" width="1.5" height="1.5" fill="#ddd"/><rect x="4.5" y="0" width="1.5" height="1.5" fill="#555"/><rect x="4.5" y="1.5" width="1.5" height="1.5" fill="#ddd"/><rect x="4.5" y="3" width="1.5" height="1.5" fill="#555"/><rect x="4.5" y="4.5" width="1.5" height="1.5" fill="#ddd"/><rect x="4.5" y="6" width="1.5" height="1.5" fill="#555"/><rect x="4.5" y="7.5" width="1.5" height="1.5" fill="#ddd"/><rect x="4.5" y="9" width="1.5" height="1.5" fill="#555"/><rect x="6" y="0" width="1.5" height="1.5" fill="#ddd"/><rect x="6" y="1.5" width="1.5" height="1.5" fill="#555"/><rect x="6" y="3" width="1.5" height="1.5" fill="#ddd"/><rect x="6" y="4.5" width="1.5" height="1.5" fill="#555"/><rect x="6" y="6" width="1.5" height="1.5" fill="#ddd"/><rect x="6" y="7.5" width="1.5" height="1.5" fill="#555"/><rect x="6" y="9" width="1.5" height="1.5" fill="#ddd"/><rect x="7.5" y="0" width="1.5" height="1.5" fill="#555"/><rect x="7.5" y="1.5" width="1.5" height="1.5" fill="#ddd"/><rect x="7.5" y="3" width="1.5" height="1.5" fill="#555"/><rect x="7.5" y="4.5" width="1.5" height="1.5" fill="#ddd"/><rect x="7.5" y="6" width="1.5" height="1.5" fill="#555"/><rect x="7.5" y="7.5" width="1.5" height="1.5" fill="#ddd"/><rect x="7.5" y="9" width="1.5" height="1.5" fill="#555"/></svg>
<svg style="left:1485px;top:679.5px" width="9" height="11" viewBox="0 0 9 11"><rect x="0" y="1.5" width="9" height="1.2" fill="#c8c8c8"/><rect x="3" y="0" width="3" height="1.5" fill="#c8c8c8"/><path d="M1 3.5 H8 L7.5 11 H1.5Z" fill="#c8c8c8"/><path d="M3 5 V10 M4.5 5 V10 M6 5 V10" stroke="#3a3a3a" stroke-width="0.6"/></svg>
<div class="a" style="left:1206px;top:694px;width:294px;height:18.3px;background:#282828;"></div>
<div class="a" style="left:1220.8px;top:694.8px;width:45px;height:17.5px;background:#3c3c3c;"></div>
<div class="a" style="left:1212px;top:700px;width:1px;height:5.5px;background:#666;"></div>
<div class="a" style="left:1214.5px;top:700px;width:1px;height:5.5px;background:#666;"></div>
<div class="t" style="left:1224.5px;top:699.38px;font-size:9px;line-height:9px;color:#f0f0f0;letter-spacing:-0.25px">Transform</div>
<div class="t" style="left:1269.5px;top:699.38px;font-size:9px;line-height:9px;color:#d8d8d8;letter-spacing:-0.25px">Navigator</div>
<div class="t" style="left:1315px;top:699.38px;font-size:9px;line-height:9px;color:#d8d8d8;letter-spacing:-0.25px">History</div>
<div class="t" style="left:1349px;top:699.38px;font-size:9px;line-height:9px;color:#d8d8d8;letter-spacing:-0.25px">Snapshots</div>
<div class="t" style="left:1395.8px;top:699.38px;font-size:9px;line-height:9px;color:#d8d8d8;letter-spacing:-0.25px">Channels</div>
<div class="a" style="left:1206px;top:712.3px;width:294px;height:81px;background:#3c3c3c;"></div>
<svg style="left:1224px;top:730px" width="29" height="28" viewBox="0 0 29 28"><g fill="#6a6a6a"><rect x="2" y="2" width="25" height="24"/><rect x="0" y="0" width="5" height="5"/><rect x="12" y="0" width="5" height="5"/><rect x="24" y="0" width="5" height="5"/><rect x="0" y="11.5" width="5" height="5"/><rect x="24" y="11.5" width="5" height="5"/><rect x="0" y="23" width="5" height="5"/><rect x="12" y="23" width="5" height="5"/><rect x="24" y="23" width="5" height="5"/></g></svg>
<svg style="left:1211.5px;top:680px" width="13" height="11" viewBox="0 0 13 11"><path d="M0.5 2.6 L6.5 0.3 L12.5 2.6 L6.5 4.9Z" fill="#bdbdbd"/><path d="M0.5 5.3 L6.5 7.6 L12.5 5.3 M0.5 8 L6.5 10.3 L12.5 8" stroke="#bdbdbd" stroke-width="1.4" fill="none"/></svg>
<div class="t" style="left:1269px;top:725.68px;font-size:9px;line-height:9px;color:#4e4e4e;">X:</div>
<div class="a" style="left:1279.2px;top:722.5px;width:50.5px;height:14.5px;background:#363636;border:1px solid #272727;border-radius:2px"></div>
<div class="t" style="left:1283.5px;top:725.68px;font-size:9px;line-height:9px;color:#9a9a9a;letter-spacing:-0.2px">0 px</div>
<div class="t" style="left:1269.5px;top:744.48px;font-size:9px;line-height:9px;color:#4e4e4e;">Y:</div>
<div class="a" style="left:1279.2px;top:741.3px;width:50.5px;height:14.5px;background:#363636;border:1px solid #272727;border-radius:2px"></div>
<div class="t" style="left:1283.5px;top:744.48px;font-size:9px;line-height:9px;color:#9a9a9a;letter-spacing:-0.2px">0 px</div>
<div class="t" style="left:1269px;top:767.88px;font-size:9px;line-height:9px;color:#4e4e4e;">R:</div>
<div class="a" style="left:1279.2px;top:764.7px;width:50.5px;height:14.5px;background:#363636;border:1px solid #272727;border-radius:2px"></div>
<div class="t" style="left:1283.5px;top:767.88px;font-size:9px;line-height:9px;color:#9a9a9a;letter-spacing:-0.2px">0 °</div>
<svg style="left:1321.2px;top:770.2px" width="6" height="4" viewBox="0 0 6 4"><path d="M0.5 0.5 H5.5 L3 3.5Z" fill="#bbb"/></svg>
<div class="t" style="left:1341px;top:725.68px;font-size:9px;line-height:9px;color:#4e4e4e;">W:</div>
<div class="a" style="left:1354px;top:722.5px;width:50.5px;height:14.5px;background:#363636;border:1px solid #272727;border-radius:2px"></div>
<div class="t" style="left:1358.3px;top:725.68px;font-size:9px;line-height:9px;color:#9a9a9a;letter-spacing:-0.2px">0 px</div>
<div class="t" style="left:1343px;top:744.48px;font-size:9px;line-height:9px;color:#4e4e4e;">H:</div>
<div class="a" style="left:1354px;top:741.3px;width:50.5px;height:14.5px;background:#363636;border:1px solid #272727;border-radius:2px"></div>
<div class="t" style="left:1358.3px;top:744.48px;font-size:9px;line-height:9px;color:#9a9a9a;letter-spacing:-0.2px">0 px</div>
<div class="t" style="left:1344.5px;top:767.88px;font-size:9px;line-height:9px;color:#4e4e4e;">S:</div>
<div class="a" style="left:1354px;top:764.7px;width:50.5px;height:14.5px;background:#363636;border:1px solid #272727;border-radius:2px"></div>
<div class="t" style="left:1358.3px;top:767.88px;font-size:9px;line-height:9px;color:#9a9a9a;letter-spacing:-0.2px">0 °</div>
<svg style="left:1396px;top:770.2px" width="6" height="4" viewBox="0 0 6 4"><path d="M0.5 0.5 H5.5 L3 3.5Z" fill="#bbb"/></svg>
<svg style="left:1410.5px;top:733px" width="4" height="12" viewBox="0 0 4 12"><ellipse cx="2" cy="3" rx="1.5" ry="2.5" fill="none" stroke="#999" stroke-width="0.9"/><ellipse cx="2" cy="9" rx="1.5" ry="2.5" fill="none" stroke="#999" stroke-width="0.9"/></svg>
<svg style="left:0;top:0" width="1500" height="811"><path d="M267.3 243.9 C268.5 238 272 224 275 215 C279 203 286 191 293 185 C297 181.5 301.5 178.5 304.3 182 C308 188 312 196 314.2 205.7 C316 218 317.2 232 318 243 C318.6 250 319.5 254 320.3 256.2 L315.6 251.5" fill="none" stroke="#e81818" stroke-width="5.0" stroke-linecap="round" stroke-linejoin="round"/><path d="M273.5 214.9 C285 214.6 302 215 314.2 215.6" fill="none" stroke="#e81818" stroke-width="4.7" stroke-linecap="round" stroke-linejoin="round"/><path d="M895.7 33.4 C902 32 910 30.2 915 29.9 C919 29.7 922.5 32 924.7 36.3 C926 39.5 925.5 42.5 922 44.2 C917 46 911 46.5 906.5 46.7 C912 47.5 921 50.5 925 53.5 C928 56.5 928.2 61 926.5 64.9 C924.5 68 920 70 913.6 70.6 C909 70.8 905 70.2 903.2 69.8" fill="none" stroke="#e81818" stroke-width="4.6" stroke-linecap="round" stroke-linejoin="round"/><path d="M900.4 34.2 C900.6 42 901 55 903 69.5" fill="none" stroke="#e81818" stroke-width="4.6" stroke-linecap="round" stroke-linejoin="round"/><path d="M87 188.7 L88.9 185.4 C95 184.2 102 183.6 107.4 184.2 C112 185 116 188.5 116.2 192 C116 195.5 112 198.5 106 201 C101 203 96 205 92.6 206 C99 206 106 206.5 111.8 208.3 C115.5 210 118 213.5 117.7 219.2 C117.2 222.5 112.5 224 106 225.5 C101 226.8 97 228 95.3 228.3" fill="none" stroke="#e81818" stroke-width="4.7" stroke-linecap="round" stroke-linejoin="round"/><path d="M88.9 185.4 C90.2 194 91.8 208 92.6 212 C93.5 218 94.2 224 95 228" fill="none" stroke="#e81818" stroke-width="4.7" stroke-linecap="round" stroke-linejoin="round"/><path d="M1287.5 442.8 C1292 443.2 1300 443.6 1304 445.5 C1309 447.5 1313.5 450.5 1313.9 453.1 C1314 456.5 1310 459.5 1303.5 462.6 C1299 464.5 1294.5 465.6 1292.3 466.1 C1296 467 1303 471 1307 474.7 C1310 478.5 1310.5 482 1309.5 485 C1308 489.5 1303 492.5 1296.6 494.6 C1292 496 1288.5 496.3 1286.2 496.3" fill="none" stroke="#e81818" stroke-width="4.4" stroke-linecap="round" stroke-linejoin="round"/><path d="M1290.1 448.8 C1290 455 1289.5 461 1289.2 465.2 C1288.5 472 1287.5 478 1287.1 482.5 C1286.6 488 1286 493 1285.8 496.3" fill="none" stroke="#e81818" stroke-width="4.4" stroke-linecap="round" stroke-linejoin="round"/><path d="M1444.6 728.3 C1449 726.8 1453 725.3 1456.6 725 C1461 724.8 1465.5 725.8 1467.5 729 C1469.5 732.5 1469.2 738 1466.6 743 C1463.5 747.5 1458 749.8 1448.3 751.6 C1453 753 1458 755 1462 757.5 C1467 760.5 1470.5 764 1471.6 770 C1472 774 1469 776.5 1466 777.2 C1461 778.2 1452 778.2 1446.6 777.5" fill="none" stroke="#e81818" stroke-width="4.1" stroke-linecap="round" stroke-linejoin="round"/><path d="M1444.6 728.3 C1445 740 1445.5 760 1446.6 777.5" fill="none" stroke="#e81818" stroke-width="4.1" stroke-linecap="round" stroke-linejoin="round"/></svg>
</body></html>
